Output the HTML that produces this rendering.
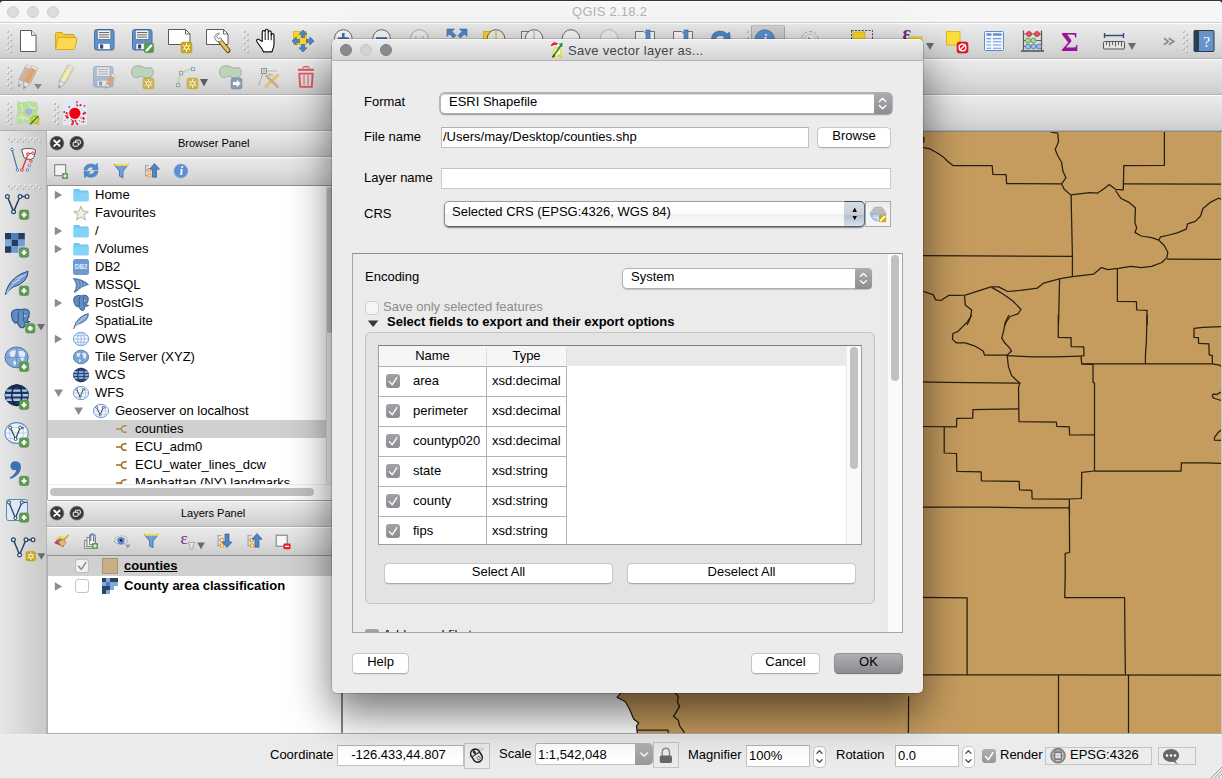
<!DOCTYPE html>
<html lang="en">
<head>
<meta charset="utf-8">
<title>QGIS 2.18.2</title>
<style>
*{box-sizing:border-box;margin:0;padding:0}
html,body{width:1222px;height:778px;overflow:hidden;background:#ececec}
body{position:relative;font-family:"Liberation Sans",sans-serif;font-size:13px;color:#000;line-height:1}
.abs{position:absolute}
.t{position:absolute;white-space:nowrap;line-height:16px;height:16px}
#titlebar{left:0;top:1px;width:1222px;height:22px;background:#f6f6f6;border-bottom:1px solid #d0d0d0;border-top:1px solid #fff;border-radius:3.5px 3.5px 0 0}
#topline{left:0;top:0;width:1222px;height:6px;background:#343434}
.tl{position:absolute;width:12px;height:12px;border-radius:50%}
.tb{left:0;width:1222px;height:36px;background:linear-gradient(#ececec 0,#e6e6e6 20%,#d8d8d8 70%,#cccccc 100%);border-top:1px solid #fff;border-bottom:1px solid #b0b0b0}
#lefttb{left:0;top:131px;width:47px;height:603px;background:linear-gradient(90deg,#e6e6e6 0,#dddddd 35%,#cdcdcd 85%,#cbcbcb 100%);border-right:1px solid #b4b4b4}
.ptitle{left:47px;width:295px;height:26px;background:linear-gradient(#ebebeb 0,#e0e0e0 40%,#cccccc 100%);border-bottom:1px solid #b0b0b0;border-top:1px solid #fff}
.ptool{left:47px;width:295px;height:29px;background:linear-gradient(#e9e9e9 0,#dedede 50%,#cccccc 100%);border-bottom:1px solid #8e8e8e;border-top:1px solid #fff}
.ptxt{font-size:11px;color:#000}
#tree{left:48px;top:186px;width:278px;height:298px;background:#fff;overflow:hidden}
.lb{left:47px;width:1px;background:#b0b0b0}
#tree .sel{position:absolute;left:0;top:234px;width:278px;height:18px;background:#d0d0d0}
#tree .r{position:absolute;white-space:nowrap;height:18px;line-height:18px;font-size:13px}
#hscroll{left:48px;top:484px;width:294px;height:17px;background:#fcfcfc;border-top:1px solid #ececec;border-bottom:1px solid #a2a2a2}
#hthumb{left:50px;top:488px;width:264px;height:8px;border-radius:4px;background:#c1c1c1}
#vscroll{left:326px;top:186px;width:16px;height:298px;background:#f5f5f5;border-left:1px solid #e0e0e0}
#vthumb{left:327px;top:187px;width:6px;height:146px;border-radius:3px;background:#c6c6c6}
#layers{left:48px;top:556px;width:294px;height:177px;background:#fff}
#layers .sel{position:absolute;left:0;top:0;width:294px;height:20px;background:#d0d0d0}
#map{left:343px;top:132px;width:878px;height:601px;background:#fff;overflow:hidden}
#mapborder{left:341px;top:131px;width:881px;height:602px;background:#c4c7cd;border-left:2px solid #858585;border-top:1px solid #8a8a8a}
#status{left:0;top:733px;width:1222px;height:45px;background:linear-gradient(#f1f1f1 0,#ebebeb 2px,#ebebeb 100%);border-top:1px solid #adadad}
.inp{position:absolute;background:#fff;border:1px solid #c2c2c2;border-top-color:#b2b2b2}
.sbtn{position:absolute;background:#ececec;border:1px solid #c4c4c4}
.btn{position:absolute;background:#fff;border-radius:4.5px;border:1px solid #c6c6c6;border-bottom-color:#ababab;box-shadow:0 1px 0 rgba(0,0,0,.06);text-align:center;font-size:13px;line-height:16px;height:20px}
.ring{border:2px solid #b7b7b7 !important;border-top-color:#b2b2b2 !important;border-bottom-color:#a8a8a8 !important;border-radius:6px !important;box-shadow:0 1px 1px rgba(0,0,0,.08),inset 0 1px 0 #d9d9d9 !important}
.ring .arr{right:-1px;top:-1px;bottom:-1px;width:18px;border-radius:0 4.5px 4.5px 0;background:linear-gradient(#ababaf,#8d8d92)}
#dlgshadow{left:332px;top:39px;width:591px;height:654px;border-radius:5px;box-shadow:0 0 0 1px rgba(0,0,0,.16),0 20px 44px rgba(0,0,0,.55)}
#dlg{left:332px;top:39px;width:591px;height:654px;border-radius:5px;background:#ececec;overflow:hidden}
#dlgtitle{left:0;top:0;width:591px;height:22px;background:linear-gradient(#ebebeb 0,#e3e3e3 40%,#d4d4d4 100%);border-bottom:1px solid #b4b4b4;border-top:1px solid #f6f6f6}
.combo{position:absolute;background:#fff;border:1px solid #b0b0b0;border-radius:4px;box-shadow:0 1px 1px rgba(0,0,0,.18)}
.combo .arr{position:absolute;right:-1px;top:-1px;bottom:-1px;width:18px;border-radius:0 4px 4px 0;background:linear-gradient(#adadb1,#8c8c91)}
.cb{position:absolute;width:14px;height:14px;border-radius:3px;background:linear-gradient(#a3a3a7,#8b8b90)}
.cbo{position:absolute;width:14px;height:14px;border-radius:3px;background:#fff;border:1px solid #c4c4c4}
</style>
</head>
<body>
<div class="abs" id="topline"></div>
<div class="abs" id="titlebar"></div>
<div class="tl" style="left:7px;top:6px;background:#dcdcdc;border:1px solid #cfcfcf"></div>
<div class="tl" style="left:27px;top:6px;background:#dcdcdc;border:1px solid #cfcfcf"></div>
<div class="tl" style="left:47px;top:6px;background:#dcdcdc;border:1px solid #cfcfcf"></div>
<div class="t" style="left:572px;top:4px;color:#b2b2b2;letter-spacing:0.27px">QGIS 2.18.2</div>

<div class="abs tb" style="top:23px"></div>
<div class="abs tb" style="top:59px"></div>
<div class="abs tb" style="top:95px"></div>
<div class="abs" style="left:751px;top:25px;width:34px;height:32px;background:linear-gradient(#d2d2d2,#b8b8b8);border:1px solid #a8a8a8;border-top-color:#c4c4c4;border-radius:2px"></div>

<svg class="abs" style="left:0;top:0;pointer-events:none" width="1222" height="131" viewBox="0 0 1222 131">
<rect x="7.2" y="30.8" width="2" height="2" fill="#b2b2b2"/><rect x="6.4" y="30.0" width="1.5" height="1.5" fill="#f4f4f4"/><rect x="10.2" y="33.7" width="2" height="2" fill="#b2b2b2"/><rect x="9.4" y="32.9" width="1.5" height="1.5" fill="#f4f4f4"/><rect x="7.2" y="36.6" width="2" height="2" fill="#b2b2b2"/><rect x="6.4" y="35.8" width="1.5" height="1.5" fill="#f4f4f4"/><rect x="10.2" y="39.5" width="2" height="2" fill="#b2b2b2"/><rect x="9.4" y="38.7" width="1.5" height="1.5" fill="#f4f4f4"/><rect x="7.2" y="42.4" width="2" height="2" fill="#b2b2b2"/><rect x="6.4" y="41.6" width="1.5" height="1.5" fill="#f4f4f4"/><rect x="10.2" y="45.3" width="2" height="2" fill="#b2b2b2"/><rect x="9.4" y="44.5" width="1.5" height="1.5" fill="#f4f4f4"/><rect x="7.2" y="48.2" width="2" height="2" fill="#b2b2b2"/><rect x="6.4" y="47.4" width="1.5" height="1.5" fill="#f4f4f4"/><rect x="10.2" y="51.1" width="2" height="2" fill="#b2b2b2"/><rect x="9.4" y="50.3" width="1.5" height="1.5" fill="#f4f4f4"/>
<path d="M20.5,30.5 h11 l4.5,4.8 v16.2 h-15.5 z" fill="#fff" stroke="#5a5a5a" stroke-width="1" stroke-linejoin="round"/><path d="M31.5,30.5 v4.8 h4.5" fill="#f0f0f0" stroke="#5a5a5a" stroke-width="0.9" stroke-linejoin="round"/>
<path d="M55.5,49.5 v-16 q0,-1 1,-1 h5.5 l1.5,2 h9.8 q1,0 1,1 v2" fill="#f3c93a" stroke="#d0a520" stroke-width="1" stroke-linejoin="round"/><path d="M55.5,49.5 l2.2,-11 q0.2,-1 1.2,-1 h17.3 q1,0 0.8,1 l-2.3,10.2 q-0.2,0.8 -1.1,0.8 z" fill="#fcd94f" stroke="#d4aa28" stroke-width="1" stroke-linejoin="round"/>
<g opacity="1.0"><rect x="94.5" y="29.5" width="19.5" height="20.5" rx="2.2" fill="#6292cf" stroke="#3f6fae"/><rect x="97.3" y="30" width="13.6" height="9.6" rx="0.8" fill="#f4f4f4" stroke="#35588c" stroke-width="0.7"/><path d="M99,32.5 h10.2 M99,34.8 h10.2 M99,37.1 h10.2" stroke="#3a3a3a" stroke-width="0.75"/><rect x="98" y="43.2" width="12.2" height="6.3" fill="#fff" stroke="#35588c" stroke-width="0.6"/><rect x="100" y="44.4" width="3.2" height="4.2" fill="#2c4d80"/></g>
<g opacity="1.0"><rect x="132.5" y="29.5" width="19.5" height="20.5" rx="2.2" fill="#6292cf" stroke="#3f6fae"/><rect x="135.3" y="30" width="13.6" height="9.6" rx="0.8" fill="#f4f4f4" stroke="#35588c" stroke-width="0.7"/><path d="M137,32.5 h10.2 M137,34.8 h10.2 M137,37.1 h10.2" stroke="#3a3a3a" stroke-width="0.75"/><rect x="136" y="43.2" width="12.2" height="6.3" fill="#fff" stroke="#35588c" stroke-width="0.6"/><rect x="138" y="44.4" width="3.2" height="4.2" fill="#2c4d80"/></g>
<rect x="144.2" y="43.2" width="9.4" height="9.4" rx="1.8" fill="#5b9a4f" stroke="#4c8742" stroke-width="0.6"/><path d="M146.6,50.4 l4.8,-4.8" stroke="#fff" stroke-width="2.1" stroke-linecap="round"/>
<path d="M168.5,29.5 h17 l4.5,4.5 v10.5 h-21.5 z" fill="#fff" stroke="#5a5a5a" stroke-linejoin="round"/><path d="M185.5,29.5 v4.5 h4.5" fill="none" stroke="#5a5a5a" stroke-width="0.9"/>
<g opacity="1.0"><rect x="181" y="42" width="11" height="11" rx="1.8" fill="#c9a91c" stroke="#b8981a" stroke-width="0.5"/><g stroke="#fff" stroke-width="1.00" fill="none"><path d="M186.5,43.10 v8.80 M182.70,45.30 l7.60,4.40 M182.70,49.70 l7.60,-4.40"/></g><circle cx="186.5" cy="47.5" r="2.00" fill="#c9a91c" stroke="#fff" stroke-width="1.00"/></g>
<path d="M206.5,29.5 h17 l4.5,4.5 v10.5 h-21.5 z" fill="#fff" stroke="#5a5a5a" stroke-linejoin="round"/><path d="M223.5,29.5 v4.5 h4.5" fill="none" stroke="#5a5a5a" stroke-width="0.9"/>
<path d="M220.5,41.5 l7.5,9" stroke="#4d4426" stroke-width="5" stroke-linecap="round"/><path d="M220.8,41.8 l7,8.4" stroke="#e6c557" stroke-width="3.2" stroke-linecap="round"/><path d="M219.5,33.2 a4.3,4.3 0 1 0 2.5,7.3 l-1.2,-2.6 l-2.6,0.6 l-1.6,-2.2 z" fill="#f2f2f2" stroke="#777" stroke-width="0.9" stroke-linejoin="round"/>
<rect x="243.8" y="30.8" width="2" height="2" fill="#b2b2b2"/><rect x="243.0" y="30.0" width="1.5" height="1.5" fill="#f4f4f4"/><rect x="246.8" y="33.7" width="2" height="2" fill="#b2b2b2"/><rect x="246.0" y="32.9" width="1.5" height="1.5" fill="#f4f4f4"/><rect x="243.8" y="36.6" width="2" height="2" fill="#b2b2b2"/><rect x="243.0" y="35.8" width="1.5" height="1.5" fill="#f4f4f4"/><rect x="246.8" y="39.5" width="2" height="2" fill="#b2b2b2"/><rect x="246.0" y="38.7" width="1.5" height="1.5" fill="#f4f4f4"/><rect x="243.8" y="42.4" width="2" height="2" fill="#b2b2b2"/><rect x="243.0" y="41.6" width="1.5" height="1.5" fill="#f4f4f4"/><rect x="246.8" y="45.3" width="2" height="2" fill="#b2b2b2"/><rect x="246.0" y="44.5" width="1.5" height="1.5" fill="#f4f4f4"/><rect x="243.8" y="48.2" width="2" height="2" fill="#b2b2b2"/><rect x="243.0" y="47.4" width="1.5" height="1.5" fill="#f4f4f4"/><rect x="246.8" y="51.1" width="2" height="2" fill="#b2b2b2"/><rect x="246.0" y="50.3" width="1.5" height="1.5" fill="#f4f4f4"/>
<path d="M262.2,41.5 v-9.3 q0,-1.6 1.5,-1.6 q1.5,0 1.5,1.6 v-1.4 q0,-1.6 1.5,-1.6 q1.5,0 1.5,1.6 v1.6 q0,-1.5 1.5,-1.5 q1.5,0 1.5,1.5 v2.6 q0,-1.4 1.4,-1.4 q1.4,0 1.4,1.4 v9 q0,3 -1.2,5 l-0.8,2.8 h-8.6 l-1.2,-2.6 q-2.5,-3.2 -5.2,-7.4 q-1,-1.7 0.4,-2.4 q1.4,-0.6 2.6,0.8 z" fill="#fff" stroke="#111" stroke-width="1.15" stroke-linejoin="round"/><path d="M265.2,33 v7 M268.2,32.5 v7.5 M271.2,34 v6.2" stroke="#111" stroke-width="1" fill="none"/>
<rect x="293.5" y="31.5" width="13" height="13" fill="#fbd42b" stroke="#e0b412" stroke-width="0.8"/><g fill="#4f86c6" stroke="#3a68a0" stroke-width="0.7" stroke-linejoin="round"><path d="M303,30 l4,4.2 h-2.4 v3.3 h-3.2 v-3.3 h-2.4 z"/><path d="M303,52 l4,-4.2 h-2.4 v-3.3 h-3.2 v3.3 h-2.4 z"/><path d="M292,41 l4.2,-4 v2.4 h3.3 v3.2 h-3.3 v2.4 z"/><path d="M314,41 l-4.2,-4 v2.4 h-3.3 v3.2 h3.3 v2.4 z"/></g>
<path d="M330,48 l5,-3 v6 z" fill="#e8b520"/>
<g opacity="1"><circle cx="343.3" cy="38.5" r="8.8" fill="#f7f7f7" stroke="#666" stroke-width="1"/><path d="M343.3,33 v11 M337.8,38.5 h11" stroke="#3f6fae" stroke-width="2.6"/></g>
<g opacity="1"><circle cx="381.6" cy="38.5" r="8.8" fill="#f7f7f7" stroke="#666" stroke-width="1"/><path d="M376.1,38.5 h11" stroke="#3f6fae" stroke-width="2.6"/></g>
<g opacity="0.45"><circle cx="419.4" cy="38.5" r="8.8" fill="#f7f7f7" stroke="#666" stroke-width="1"/><text x="419.4" y="41" font-size="8" font-weight="bold" text-anchor="middle" fill="#888" font-family="Liberation Sans, sans-serif">1:1</text></g>
<g fill="#4f86c6" stroke="#3a68a0" stroke-width="0.6"><path d="M447,29 h7.5 l-2.5,2.5 l4,4 l-2.5,2.5 l-4,-4 l-2.5,2.5 z"/><path d="M467,29 h-7.5 l2.5,2.5 l-4,4 l2.5,2.5 l4,-4 l2.5,2.5 z"/></g>
<rect x="483.5" y="31.5" width="9" height="9" fill="#fbd42b" stroke="#e0b412"/><circle cx="496" cy="38.5" r="8.8" fill="#f3ead0" stroke="#666"/><path d="M496,31 v9" stroke="#aaa"/>
<rect x="521.5" y="31.5" width="9" height="9" fill="#ececec" stroke="#777"/><circle cx="534" cy="38.5" r="8.8" fill="#f4f4f4" stroke="#666"/><path d="M534,31 v9" stroke="#aaa"/>
<circle cx="571" cy="38.5" r="8.8" fill="#f4f4f4" stroke="#666"/>
<circle cx="609" cy="38.5" r="8.8" fill="#f4f4f4" stroke="#999" opacity="0.6"/>
<path d="M635.5,41 v-9.5 h8 l2,1.5 l2,-1.5 h7 v9.5" fill="#f6f6f6" stroke="#666" stroke-width="0.9"/><rect x="646" y="30" width="4" height="11" fill="#5e90cd" stroke="#3a68a0" stroke-width="0.6"/>
<path d="M673.5,41 v-9.5 h8 l2,1.5 l2,-1.5 h7 v9.5" fill="#f6f6f6" stroke="#666" stroke-width="0.9"/><rect x="684" y="30" width="4" height="11" fill="#5e90cd" stroke="#3a68a0" stroke-width="0.6"/>
<path d="M711.5,40 q-0.5,-8 8,-9 q5,-0.3 7.5,3 l2.5,-2 l1,8 h-8 l2.2,-2.5 q-2,-2.5 -5.2,-2 q-4,0.8 -4,4.5 z" fill="#4f86c6" stroke="#3a68a0" stroke-width="0.6"/>
<rect x="746.8" y="30.8" width="2" height="2" fill="#b2b2b2"/><rect x="746.0" y="30.0" width="1.5" height="1.5" fill="#f4f4f4"/><rect x="749.8" y="33.7" width="2" height="2" fill="#b2b2b2"/><rect x="749.0" y="32.9" width="1.5" height="1.5" fill="#f4f4f4"/><rect x="746.8" y="36.6" width="2" height="2" fill="#b2b2b2"/><rect x="746.0" y="35.8" width="1.5" height="1.5" fill="#f4f4f4"/>
<circle cx="764.8" cy="39.4" r="9.6" fill="#5b8fd0" stroke="#3e6daa" stroke-width="0.8"/><text x="765.2" y="43.4" font-size="12" font-style="italic" font-weight="bold" text-anchor="middle" fill="#fff" font-family="Liberation Serif, serif">i</text>
<g opacity="0.75"><circle cx="809.8" cy="40" r="8.4" fill="#e9e9e9" stroke="#8a8a8a" stroke-width="1" stroke-dasharray="3.2 1.6"/><circle cx="809.8" cy="40" r="5.5" fill="#f4f4f4" stroke="#9a9a9a" stroke-width="0.7"/><path d="M808,36.5 l5,3.5 l-5,3.5 z" fill="#6c96c8"/></g>
<rect x="851.5" y="30.5" width="21" height="14" fill="none" stroke="#333" stroke-width="0.9" stroke-dasharray="2 1.4"/><rect x="853" y="32" width="12" height="12" fill="#fbd42b" stroke="#d8ae10" stroke-width="0.7"/>
<text x="902.6" y="40.4" font-size="20" font-weight="bold" fill="#6a2a7a" font-family="Liberation Serif, serif">ε</text><rect x="909" y="37" width="13" height="8" fill="#fbd42b" stroke="#d8ae10" stroke-width="0.7"/>
<path d="M926,43 h8 l-4.0,7 z" fill="#6b6b6b"/>
<rect x="946.5" y="31.5" width="13.5" height="13.5" fill="#fde13a" stroke="#d9b616" stroke-width="0.9"/><rect x="957" y="42" width="11" height="11" rx="2.2" fill="#e1202a" stroke="#b8131c" stroke-width="0.6"/><circle cx="962.5" cy="47.5" r="3.4" fill="none" stroke="#fff" stroke-width="1.3"/><path d="M960.2,49.8 l4.6,-4.6" stroke="#fff" stroke-width="1.3"/>
<rect x="984.5" y="31.5" width="19" height="19" rx="1" fill="#f3f7fd" stroke="#5b8dcb" stroke-width="1"/><rect x="986.5" y="33.3" width="5" height="2.4" fill="#5b8dcb"/><rect x="993" y="33.3" width="8.5" height="2.4" fill="#5b8dcb"/><g stroke="#6c9bd4" stroke-width="1.1"><path d="M986.5,38.6 h4.5 M993,38.6 h8.5 M986.5,41.8 h4.5 M993,41.8 h8.5 M986.5,45 h4.5 M993,45 h8.5 M986.5,48.2 h4.5 M993,48.2 h8.5"/></g>
<path d="M1023.5,30.5 v20 M1041.5,30.5 v20" stroke="#555" stroke-width="1.2"/><path d="M1021,51 h23" stroke="#555" stroke-width="1.6"/><path d="M1023.5,34 h18 M1023.5,40.5 h18 M1023.5,46.5 h18" stroke="#555" stroke-width="0.9"/><g stroke-width="0.8"><circle cx="1029" cy="34" r="2.5" fill="#e8545c" stroke="#b52730"/><circle cx="1037" cy="34" r="2.5" fill="#e8545c" stroke="#b52730"/><circle cx="1028" cy="40.5" r="2.5" fill="#a6d69a" stroke="#4f9a45"/><circle cx="1033.5" cy="40.5" r="2.5" fill="#a6d69a" stroke="#4f9a45"/><circle cx="1028" cy="46.5" r="2.5" fill="#9cc0e8" stroke="#3f6fae"/><circle cx="1033.5" cy="46.5" r="2.5" fill="#9cc0e8" stroke="#3f6fae"/><circle cx="1039" cy="46.5" r="2.5" fill="#9cc0e8" stroke="#3f6fae"/></g>
<text x="1069.8" y="50.5" font-size="27" font-weight="bold" text-anchor="middle" fill="#9c1199" font-family="Liberation Serif, serif">Σ</text>
<path d="M1104,35.5 h20 M1104.5,33 v5 M1123.5,33 v5" stroke="#2f4f7a" stroke-width="1.4" fill="none"/><rect x="1103.5" y="41.5" width="21" height="7.5" rx="1" fill="#e3e3e3" stroke="#555" stroke-width="1"/><path d="M1106.5,42 v3 M1109.5,42 v4.5 M1112.5,42 v3 M1115.5,42 v4.5 M1118.5,42 v3 M1121.5,42 v4.5" stroke="#555" stroke-width="0.9"/>
<path d="M1128,43 h8 l-4.0,7 z" fill="#6b6b6b"/>
<path d="M1164,38.2 l4.2,3.3 l-4.2,3.3 M1168.8,38.2 l5,3.3 l-5,3.3" stroke="#8a8a8a" stroke-width="1.7" fill="none"/>
<rect x="1182.8" y="30.8" width="2" height="2" fill="#b2b2b2"/><rect x="1182.0" y="30.0" width="1.5" height="1.5" fill="#f4f4f4"/><rect x="1185.8" y="33.7" width="2" height="2" fill="#b2b2b2"/><rect x="1185.0" y="32.9" width="1.5" height="1.5" fill="#f4f4f4"/><rect x="1182.8" y="36.6" width="2" height="2" fill="#b2b2b2"/><rect x="1182.0" y="35.8" width="1.5" height="1.5" fill="#f4f4f4"/><rect x="1185.8" y="39.5" width="2" height="2" fill="#b2b2b2"/><rect x="1185.0" y="38.7" width="1.5" height="1.5" fill="#f4f4f4"/><rect x="1182.8" y="42.4" width="2" height="2" fill="#b2b2b2"/><rect x="1182.0" y="41.6" width="1.5" height="1.5" fill="#f4f4f4"/><rect x="1185.8" y="45.3" width="2" height="2" fill="#b2b2b2"/><rect x="1185.0" y="44.5" width="1.5" height="1.5" fill="#f4f4f4"/><rect x="1182.8" y="48.2" width="2" height="2" fill="#b2b2b2"/><rect x="1182.0" y="47.4" width="1.5" height="1.5" fill="#f4f4f4"/><rect x="1185.8" y="51.1" width="2" height="2" fill="#b2b2b2"/><rect x="1185.0" y="50.3" width="1.5" height="1.5" fill="#f4f4f4"/>
<rect x="1194" y="30.5" width="20" height="21" rx="1" fill="#6593cb" stroke="#222c3a" stroke-width="0.9"/><rect x="1194" y="30.5" width="5" height="21" fill="#2b3e54"/><text x="1206.6" y="46.6" font-size="15.5" text-anchor="middle" fill="#fff" font-family="Liberation Serif, serif">?</text>
<rect x="7.2" y="66.8" width="2" height="2" fill="#b2b2b2"/><rect x="6.4" y="66.0" width="1.5" height="1.5" fill="#f4f4f4"/><rect x="10.2" y="69.7" width="2" height="2" fill="#b2b2b2"/><rect x="9.4" y="68.9" width="1.5" height="1.5" fill="#f4f4f4"/><rect x="7.2" y="72.6" width="2" height="2" fill="#b2b2b2"/><rect x="6.4" y="71.8" width="1.5" height="1.5" fill="#f4f4f4"/><rect x="10.2" y="75.5" width="2" height="2" fill="#b2b2b2"/><rect x="9.4" y="74.7" width="1.5" height="1.5" fill="#f4f4f4"/><rect x="7.2" y="78.4" width="2" height="2" fill="#b2b2b2"/><rect x="6.4" y="77.6" width="1.5" height="1.5" fill="#f4f4f4"/><rect x="10.2" y="81.3" width="2" height="2" fill="#b2b2b2"/><rect x="9.4" y="80.5" width="1.5" height="1.5" fill="#f4f4f4"/><rect x="7.2" y="84.2" width="2" height="2" fill="#b2b2b2"/><rect x="6.4" y="83.4" width="1.5" height="1.5" fill="#f4f4f4"/><rect x="10.2" y="87.1" width="2" height="2" fill="#b2b2b2"/><rect x="9.4" y="86.3" width="1.5" height="1.5" fill="#f4f4f4"/>
<g opacity="0.9"><path d="M24.3,82.0 L31.7,67.3 L26.3,64.7 L19.0,79.4 z" fill="#d9b6a0" stroke="#a09a90" stroke-width="0.6"/><path d="M21.6,80.7 L29.0,66.0" stroke="#d7a88c" stroke-width="2.2"/><path d="M30.7,69.3 L31.7,67.3 L26.3,64.7 L25.3,66.6 z" fill="#f2f2f2" stroke="#b5b5b5" stroke-width="0.5"/><path d="M18.5,87.0 L24.3,82.0 L19.0,79.4 z" fill="#e4e4e4" stroke="#9a9a9a" stroke-width="0.6"/><path d="M18.5,87.0 L20.8,85.0 L18.7,83.9 z" fill="#8d8d8d"/></g>
<g opacity="0.95"><path d="M29.8,83.9 L37.8,68.5 L32.2,65.5 L24.1,80.9 z" fill="#dfae84" stroke="#a09a90" stroke-width="0.6"/><path d="M26.9,82.4 L35.0,67.0" stroke="#e19a62" stroke-width="2.3"/><path d="M36.8,70.4 L37.8,68.5 L32.2,65.5 L31.1,67.5 z" fill="#f2f2f2" stroke="#b5b5b5" stroke-width="0.5"/><path d="M23.5,89.0 L29.8,83.9 L24.1,80.9 z" fill="#e4e4e4" stroke="#9a9a9a" stroke-width="0.6"/><path d="M23.5,89.0 L26.0,87.0 L23.7,85.8 z" fill="#8d8d8d"/></g>
<path d="M34,84 h8 l-4.0,5.5 z" fill="#8b8b8b"/>
<g opacity="0.95"><path d="M65.0,83.5 L73.8,68.1 L68.2,64.9 L59.5,80.3 z" fill="#efe09a" stroke="#a09a90" stroke-width="0.6"/><path d="M62.2,81.9 L71.0,66.5" stroke="#f5ecc0" stroke-width="2.3"/><path d="M72.7,70.0 L73.8,68.1 L68.2,64.9 L67.1,66.8 z" fill="#f2f2f2" stroke="#b5b5b5" stroke-width="0.5"/><path d="M58.5,88.5 L65.0,83.5 L59.5,80.3 z" fill="#e4e4e4" stroke="#9a9a9a" stroke-width="0.6"/><path d="M58.5,88.5 L61.1,86.5 L58.9,85.2 z" fill="#8d8d8d"/></g>
<g opacity="0.42"><rect x="93.5" y="66.5" width="19.5" height="20.5" rx="2.2" fill="#6292cf" stroke="#3f6fae"/><rect x="96.3" y="67" width="13.6" height="9.6" rx="0.8" fill="#f4f4f4" stroke="#35588c" stroke-width="0.7"/><path d="M98,69.5 h10.2 M98,71.8 h10.2 M98,74.1 h10.2" stroke="#3a3a3a" stroke-width="0.75"/><rect x="97" y="80.2" width="12.2" height="6.3" fill="#fff" stroke="#35588c" stroke-width="0.6"/><rect x="99" y="81.4" width="3.2" height="4.2" fill="#2c4d80"/></g>
<g opacity="0.9"><path d="M110.0,85.7 L115.9,76.2 L112.1,73.8 L106.1,83.2 z" fill="#dfae84" stroke="#a09a90" stroke-width="0.6"/><path d="M108.0,84.5 L114.0,75.0" stroke="#e19a62" stroke-width="1.7"/><path d="M114.8,78.1 L115.9,76.2 L112.1,73.8 L110.9,75.6 z" fill="#f2f2f2" stroke="#b5b5b5" stroke-width="0.5"/><path d="M105.5,88.5 L110.0,85.7 L106.1,83.2 z" fill="#e4e4e4" stroke="#9a9a9a" stroke-width="0.6"/><path d="M105.5,88.5 L107.3,87.4 L105.7,86.4 z" fill="#8d8d8d"/></g>
<path d="M131.6,71.6 q0.2,-5.4 6.2,-5.8 q3.4,0 6.4,1.8 q2.6,1.2 5,0.2 q4,-0.6 4,4.6 q-0.4,5.2 -5.4,5.6 q-3.4,-0.2 -6,-1.6 q-2.6,-0.4 -5,1.2 q-4.8,0.6 -5.2,-6 z" fill="#b5d3b5" stroke="#9a9a9a" stroke-width="0.9" opacity="0.85"/>
<g opacity="0.75"><rect x="143" y="78" width="11" height="11" rx="1.8" fill="#c9a91c" stroke="#b8981a" stroke-width="0.5"/><g stroke="#fff" stroke-width="1.00" fill="none"><path d="M148.5,79.10 v8.80 M144.70,81.30 l7.60,4.40 M144.70,85.70 l7.60,-4.40"/></g><circle cx="148.5" cy="83.5" r="2.00" fill="#c9a91c" stroke="#fff" stroke-width="1.00"/></g>
<g opacity="0.8"><path d="M178,85 q0.2,-14.6 15.4,-16.4" fill="none" stroke="#b0d8b0" stroke-width="1.9"/><rect x="176.5" y="83.5" width="3.2" height="3.2" fill="#e2e2e2" stroke="#8a8a8a" stroke-width="0.9"/><rect x="179.5" y="71.5" width="3.2" height="3.2" fill="#e2e2e2" stroke="#8a8a8a" stroke-width="0.9"/><rect x="191.5" y="67.5" width="3.2" height="3.2" fill="#e2e2e2" stroke="#8a8a8a" stroke-width="0.9"/></g>
<g opacity="0.75"><rect x="187" y="78" width="11" height="11" rx="1.8" fill="#c9a91c" stroke="#b8981a" stroke-width="0.5"/><g stroke="#fff" stroke-width="1.00" fill="none"><path d="M192.5,79.10 v8.80 M188.70,81.30 l7.60,4.40 M188.70,85.70 l7.60,-4.40"/></g><circle cx="192.5" cy="83.5" r="2.00" fill="#c9a91c" stroke="#fff" stroke-width="1.00"/></g>
<path d="M200,79 h8 l-4.0,7.5 z" fill="#5d5d5d"/>
<path d="M219.6,71.6 q0.2,-5.4 6.2,-5.8 q3.4,0 6.4,1.8 q2.6,1.2 5,0.2 q4,-0.6 4,4.6 q-0.4,5.2 -5.4,5.6 q-3.4,-0.2 -6,-1.6 q-2.6,-0.4 -5,1.2 q-4.8,0.6 -5.2,-6 z" fill="#b5d3b5" stroke="#9a9a9a" stroke-width="0.9" opacity="0.85"/>
<g opacity="0.85"><rect x="231" y="78" width="11" height="11" rx="2" fill="#7893ac" stroke="#6a8197" stroke-width="0.6"/><path d="M233,82 h3.8 v-2.3 l4,3.8 l-4,3.8 v-2.3 h-3.8 z" fill="#fff"/></g>
<g opacity="0.8"><path d="M258.5,86 l5.5,-16" stroke="#9a9a9a" stroke-width="0.9"/><rect x="261.5" y="68.5" width="5" height="5" fill="#f4f4f4" stroke="#777" stroke-width="0.9"/><circle cx="264" cy="71" r="1.3" fill="none" stroke="#777" stroke-width="0.7"/><path d="M267,71 h10" stroke="#bbb" stroke-width="1.2"/><path d="M266,86.5 l12,-11.5" stroke="#d9bd58" stroke-width="2.6" stroke-linecap="round"/><path d="M266.5,76 l11,10.5" stroke="#c9a268" stroke-width="2.8" stroke-linecap="round"/><path d="M266,77.5 l4,-3.4 l3,1.6" stroke="#b0b0b0" stroke-width="1.8" fill="none"/></g>
<g fill="none" stroke="#df575c"><path d="M298,69.8 h16" stroke-width="2"/><path d="M302.8,68.6 q0,-1.9 1.8,-1.9 h2.8 q1.8,0 1.8,1.9" stroke-width="1.2"/><path d="M299.3,73.6 h13.4 l-0.9,13.3 h-11.6 z" stroke-width="1.9" stroke-linejoin="round"/><path d="M304,75 v10.6 M308,75 v10.6" stroke-width="1.7" stroke="#e68f92"/></g>
<rect x="7.2" y="102.8" width="2" height="2" fill="#b2b2b2"/><rect x="6.4" y="102.0" width="1.5" height="1.5" fill="#f4f4f4"/><rect x="10.2" y="105.7" width="2" height="2" fill="#b2b2b2"/><rect x="9.4" y="104.9" width="1.5" height="1.5" fill="#f4f4f4"/><rect x="7.2" y="108.6" width="2" height="2" fill="#b2b2b2"/><rect x="6.4" y="107.8" width="1.5" height="1.5" fill="#f4f4f4"/><rect x="10.2" y="111.5" width="2" height="2" fill="#b2b2b2"/><rect x="9.4" y="110.7" width="1.5" height="1.5" fill="#f4f4f4"/><rect x="7.2" y="114.4" width="2" height="2" fill="#b2b2b2"/><rect x="6.4" y="113.6" width="1.5" height="1.5" fill="#f4f4f4"/><rect x="10.2" y="117.3" width="2" height="2" fill="#b2b2b2"/><rect x="9.4" y="116.5" width="1.5" height="1.5" fill="#f4f4f4"/><rect x="7.2" y="120.2" width="2" height="2" fill="#b2b2b2"/><rect x="6.4" y="119.4" width="1.5" height="1.5" fill="#f4f4f4"/><rect x="10.2" y="123.1" width="2" height="2" fill="#b2b2b2"/><rect x="9.4" y="122.3" width="1.5" height="1.5" fill="#f4f4f4"/>
<path d="M17,101.5 l6,1 l6,-1.2 l8,0.8 l1,7 l-1.2,6 l1.2,8 l-7,1 l-7,-1 l-7,1.2 l-0.6,-8 l1,-6 z" fill="#b7dca0"/><path d="M20,104 q4,3 2,8 q-2,5 2,9 M28,103 q3,6 8,5 M18,118 q6,-3 10,2" stroke="#d9e8b8" stroke-width="1.6" fill="none"/><path d="M25,110 q4,-3 7,0 q1,4 -3,5 q-4,0 -4,-5 z" fill="#9db8e0"/><path d="M20,113 q3,-2 6,1" stroke="#e5c08a" stroke-width="0.9" fill="none"/><circle cx="35" cy="119.5" r="3.6" fill="none" stroke="#c9c11e" stroke-width="2"/><path d="M30,124.5 l8.5,-8.5" stroke="#3e8a2c" stroke-width="1.6"/><path d="M36,122 l2.8,2.8" stroke="#c9c11e" stroke-width="1.8"/>
<rect x="54.0" y="102.8" width="2" height="2" fill="#b2b2b2"/><rect x="53.2" y="102.0" width="1.5" height="1.5" fill="#f4f4f4"/><rect x="57.0" y="105.7" width="2" height="2" fill="#b2b2b2"/><rect x="56.2" y="104.9" width="1.5" height="1.5" fill="#f4f4f4"/><rect x="54.0" y="108.6" width="2" height="2" fill="#b2b2b2"/><rect x="53.2" y="107.8" width="1.5" height="1.5" fill="#f4f4f4"/><rect x="57.0" y="111.5" width="2" height="2" fill="#b2b2b2"/><rect x="56.2" y="110.7" width="1.5" height="1.5" fill="#f4f4f4"/><rect x="54.0" y="114.4" width="2" height="2" fill="#b2b2b2"/><rect x="53.2" y="113.6" width="1.5" height="1.5" fill="#f4f4f4"/><rect x="57.0" y="117.3" width="2" height="2" fill="#b2b2b2"/><rect x="56.2" y="116.5" width="1.5" height="1.5" fill="#f4f4f4"/><rect x="54.0" y="120.2" width="2" height="2" fill="#b2b2b2"/><rect x="53.2" y="119.4" width="1.5" height="1.5" fill="#f4f4f4"/><rect x="57.0" y="123.1" width="2" height="2" fill="#b2b2b2"/><rect x="56.2" y="122.3" width="1.5" height="1.5" fill="#f4f4f4"/>
<rect x="63" y="101" width="24" height="24" fill="#dfe9f7"/><circle cx="74.8" cy="113.3" r="5.6" fill="#f10012"/><circle cx="75.5" cy="121.0" r="1.1" fill="#f01020"/><circle cx="67.2" cy="114.3" r="0.5" fill="#f01020"/><circle cx="65.0" cy="120.3" r="0.5" fill="#f01020"/><circle cx="76.6" cy="123.2" r="0.9" fill="#f01020"/><circle cx="77.0" cy="101.9" r="0.9" fill="#f01020"/><circle cx="77.5" cy="124.2" r="0.9" fill="#f01020"/><circle cx="77.4" cy="105.5" r="0.9" fill="#f01020"/><circle cx="71.9" cy="124.2" r="0.9" fill="#f01020"/><circle cx="83.7" cy="118.7" r="1.1" fill="#f01020"/><circle cx="66.7" cy="113.0" r="1.1" fill="#f01020"/><circle cx="72.5" cy="124.2" r="0.9" fill="#f01020"/><circle cx="83.5" cy="113.7" r="0.9" fill="#f01020"/><circle cx="80.5" cy="105.2" r="1.1" fill="#f01020"/><circle cx="67.1" cy="117.3" r="1.1" fill="#f01020"/><circle cx="79.5" cy="120.8" r="0.5" fill="#f01020"/><circle cx="83.2" cy="118.0" r="0.9" fill="#f01020"/><circle cx="64.2" cy="112.0" r="0.9" fill="#f01020"/><circle cx="81.4" cy="121.8" r="0.5" fill="#f01020"/><circle cx="67.7" cy="117.6" r="1.1" fill="#f01020"/><circle cx="73.3" cy="122.3" r="0.9" fill="#f01020"/><circle cx="69.3" cy="107.1" r="0.9" fill="#f01020"/><circle cx="80.9" cy="117.8" r="0.6" fill="#f01020"/><circle cx="73.0" cy="123.4" r="0.6" fill="#f01020"/><circle cx="83.5" cy="121.7" r="0.9" fill="#f01020"/><circle cx="67.6" cy="115.2" r="0.5" fill="#f01020"/><circle cx="84.5" cy="105.8" r="0.9" fill="#f01020"/><circle cx="83.5" cy="114.3" r="0.6" fill="#f01020"/><circle cx="76.3" cy="104.0" r="0.5" fill="#f01020"/><circle cx="72.6" cy="121.2" r="1.1" fill="#f01020"/><circle cx="72.6" cy="121.5" r="0.6" fill="#f01020"/><circle cx="71.3" cy="119.6" r="0.5" fill="#f01020"/><circle cx="66.0" cy="115.9" r="0.9" fill="#f01020"/><circle cx="85.0" cy="113.1" r="1.1" fill="#f01020"/><circle cx="84.2" cy="112.2" r="0.6" fill="#f01020"/>
</svg>

<div class="abs" id="lefttb"></div>

<div class="abs ptitle" style="top:131px"></div>
<div class="t ptxt" style="left:178px;top:135px">Browser Panel</div>
<div class="abs ptool" style="top:157px"></div>
<div class="abs" id="tree">
  <div class="sel"></div>
  <div class="r" style="left:47px;top:0">Home</div>
  <div class="r" style="left:47px;top:18px">Favourites</div>
  <div class="r" style="left:47px;top:36px">/</div>
  <div class="r" style="left:47px;top:54px">/Volumes</div>
  <div class="r" style="left:47px;top:72px">DB2</div>
  <div class="r" style="left:47px;top:90px">MSSQL</div>
  <div class="r" style="left:47px;top:108px">PostGIS</div>
  <div class="r" style="left:47px;top:126px">SpatiaLite</div>
  <div class="r" style="left:47px;top:144px">OWS</div>
  <div class="r" style="left:47px;top:162px">Tile Server (XYZ)</div>
  <div class="r" style="left:47px;top:180px">WCS</div>
  <div class="r" style="left:47px;top:198px">WFS</div>
  <div class="r" style="left:67px;top:216px">Geoserver on localhost</div>
  <div class="r" style="left:87px;top:234px">counties</div>
  <div class="r" style="left:87px;top:252px">ECU_adm0</div>
  <div class="r" style="left:87px;top:270px">ECU_water_lines_dcw</div>
  <div class="r" style="left:87px;top:288px">Manhattan (NY) landmarks</div>
  <svg class="abs" style="left:68px;top:288px" width="12" height="18" viewBox="0 0 12 18"><path d="M0,9 h5.4" stroke="#9a6a1c" stroke-width="1.5" fill="none"/><path d="M10.6,5.7 q-5.2,-0.2 -5.2,3.3 q0,3.5 5.2,3.3" stroke="#9a6a1c" stroke-width="1.5" fill="none"/></svg>
</div>
<div class="abs lb" style="top:186px;height:314px"></div>
<div class="abs lb" style="top:556px;height:177px"></div>
<div class="abs" id="vscroll"></div>
<div class="abs" id="vthumb"></div>
<div class="abs" id="hscroll"></div>
<div class="abs" id="hthumb"></div>

<div class="abs ptitle" style="top:501px"></div>
<div class="t ptxt" style="left:181px;top:505px">Layers Panel</div>
<div class="abs ptool" style="top:527px"></div>
<div class="abs" id="layers">
  <div class="sel"></div>
  <div class="cbo" style="left:27px;top:3px;background:#f0f0f0;border-color:#bdbdbd"></div>
  <div class="abs" style="left:54px;top:2px;width:16px;height:16px;background:#c8ae87;border:1px solid #a8926f"></div>
  <div class="t" style="left:76px;top:2px;font-weight:bold;text-decoration:underline">counties</div>
  <div class="cbo" style="left:27px;top:23px"></div>
  <div class="t" style="left:76px;top:22px;font-weight:bold">County area classification</div>
</div>

<svg class="abs" style="left:0;top:131px;pointer-events:none" width="342" height="602" viewBox="0 131 342 602">
<circle cx="56.9" cy="143.2" r="6.9" fill="#3a3a3a" stroke="#6a6a6a" stroke-width="0.6"/><path d="M54.2,140.5 l5.4,5.4 M59.6,140.5 l-5.4,5.4" stroke="#fff" stroke-width="1.9" stroke-linecap="round"/>
<circle cx="76.8" cy="143.2" r="6.9" fill="#3a3a3a" stroke="#6a6a6a" stroke-width="0.6"/><rect x="75.3" y="140.2" width="5" height="4" rx="0.8" fill="none" stroke="#fff" stroke-width="1"/><rect x="73.2" y="142.2" width="5" height="4" rx="0.8" fill="#3a3a3a" stroke="#fff" stroke-width="1"/>
<circle cx="56.9" cy="513.2" r="6.9" fill="#3a3a3a" stroke="#6a6a6a" stroke-width="0.6"/><path d="M54.2,510.50000000000006 l5.4,5.4 M59.6,510.50000000000006 l-5.4,5.4" stroke="#fff" stroke-width="1.9" stroke-linecap="round"/>
<circle cx="76.8" cy="513.2" r="6.9" fill="#3a3a3a" stroke="#6a6a6a" stroke-width="0.6"/><rect x="75.3" y="510.20000000000005" width="5" height="4" rx="0.8" fill="none" stroke="#fff" stroke-width="1"/><rect x="73.2" y="512.2" width="5" height="4" rx="0.8" fill="#3a3a3a" stroke="#fff" stroke-width="1"/>
<rect x="54.7" y="164.7" width="11" height="11" fill="#f2f2f2" stroke="#777" stroke-width="1"/><rect x="62" y="173" width="6" height="6" rx="1" fill="#5d9b50"/><circle cx="65" cy="176" r="1.7" fill="#d8ecd4"/>
<g fill="#4f8ad0" stroke="#3668a6" stroke-width="0.5" stroke-linejoin="round"><path d="M84,170.1 q0.5,-6 7,-6.2 q2.6,0 4.4,1.4 l1.8,-1.9 l0.9,6.4 h-6.4 l1.9,-2 q-1.2,-0.9 -2.7,-0.8 q-3.2,0.4 -3.8,3.1 z"/><path d="M98,171.1 q-0.5,6 -7,6.2 q-2.6,0 -4.4,-1.4 l-1.8,1.9 l-0.9,-6.4 h6.4 l-1.9,2 q1.2,0.9 2.7,0.8 q3.2,-0.4 3.8,-3.1 z"/></g>
<path d="M114.2,164.6 h14 l-5.3,6.6 v6.6 l-3.4,-1.6 v-5 z" fill="#6da0dd" stroke="#3d6eae" stroke-width="0.9" stroke-linejoin="round"/><path d="M114.5,164.9 h13.4" stroke="#f6dc3c" stroke-width="2"/>
<path d="M145,165.6 h4 M145.5,165.6 v11 M145.5,170.1 h3 M145.5,175.6 h3" stroke="#9a9a9a" stroke-width="0.9" fill="none"/><rect x="148" y="168.6" width="2.8" height="2.8" fill="#fff" stroke="#f39a1d" stroke-width="1"/><rect x="148" y="174.1" width="2.8" height="2.8" fill="#fff" stroke="#f39a1d" stroke-width="1"/><path d="M154.5,163.6 l5,5.6 h-3 v8 h-4 v-8 h-3 z" fill="#4f86c6" stroke="#2f5c96" stroke-width="0.7" stroke-linejoin="round"/>
<circle cx="180.9" cy="171" r="6.9" fill="#5b8fd0" stroke="#7da6da" stroke-width="0.8"/><text x="181.3" y="175.2" font-size="11.5" font-style="italic" font-weight="bold" text-anchor="middle" fill="#fff" font-family="Liberation Serif, serif">i</text>
<path d="M54.8,190.7 l7.4,4.3 l-7.4,4.3 z" fill="#8c8c8c"/>
<path d="M73.5,189.8 q0,-0.9 0.9,-0.9 h4.6 l1.6,1.6 h7 q0.9,0 0.9,0.9 v8.9 q0,0.9 -0.9,0.9 h-13.2 q-0.9,0 -0.9,-0.9 z" fill="#6fc9f2"/><path d="M73.5,192.4 h15 v7.9 q0,0.9 -0.9,0.9 h-13.2 q-0.9,0 -0.9,-0.9 z" fill="#84d4f7"/>
<polygon points="81.0,206.2 82.9,211.1 88.2,211.5 84.1,214.8 85.5,219.9 81.0,217.1 76.5,219.9 77.9,214.8 73.8,211.5 79.1,211.1" fill="#f0f1e8" stroke="#b9bda4" stroke-width="1.1" stroke-linejoin="round"/>
<path d="M54.8,226.7 l7.4,4.3 l-7.4,4.3 z" fill="#8c8c8c"/>
<path d="M73.5,225.8 q0,-0.9 0.9,-0.9 h4.6 l1.6,1.6 h7 q0.9,0 0.9,0.9 v8.9 q0,0.9 -0.9,0.9 h-13.2 q-0.9,0 -0.9,-0.9 z" fill="#6fc9f2"/><path d="M73.5,228.4 h15 v7.9 q0,0.9 -0.9,0.9 h-13.2 q-0.9,0 -0.9,-0.9 z" fill="#84d4f7"/>
<path d="M54.8,244.7 l7.4,4.3 l-7.4,4.3 z" fill="#8c8c8c"/>
<path d="M73.5,243.8 q0,-0.9 0.9,-0.9 h4.6 l1.6,1.6 h7 q0.9,0 0.9,0.9 v8.9 q0,0.9 -0.9,0.9 h-13.2 q-0.9,0 -0.9,-0.9 z" fill="#6fc9f2"/><path d="M73.5,246.4 h15 v7.9 q0,0.9 -0.9,0.9 h-13.2 q-0.9,0 -0.9,-0.9 z" fill="#84d4f7"/>
<rect x="73" y="259" width="16" height="16" rx="2.5" fill="#6f9ad0"/><text x="81" y="269.2" font-size="6.3" font-weight="bold" text-anchor="middle" fill="#e6eef8" font-family="Liberation Sans, sans-serif">DB2</text>
<path d="M73.5,278.5 q9,0.5 15,6 q-7,1.5 -13,7.5 q-1,0 -1.5,0.2 q5,-7 -0.5,-13.7 z" fill="#5c86ba" stroke="#3d6292" stroke-width="0.7" stroke-linejoin="round"/><path d="M77,280 q3,4 0.5,9 M80.5,281.4 q2.2,3 0.5,6.2 M84,283 q1.2,1.6 0.4,3.4" stroke="#a8c2e2" stroke-width="0.8" fill="none"/>
<path d="M54.8,298.7 l7.4,4.3 l-7.4,4.3 z" fill="#8c8c8c"/>
<g transform="translate(73.5,303) scale(1.0)"><path d="M3.2,-7.2 q-3.2,0.6 -3,4.6 q0.2,3.6 2.6,6 q1.4,0.8 2.2,-0.6 q1,3.6 3.2,4.6 q2.4,0.6 2.8,-1.8 q0.2,-1.8 0.6,-2.6 q2.4,0.6 3.6,-0.6 q-1.6,-0.2 -2.4,-1 q2.4,-3.2 2,-6.6 q-0.8,-2.8 -4.4,-2.6 q-1.6,0 -2.6,0.6 q-2,-0.8 -4.6,0 z" fill="#5f8dc4" stroke="#30527f" stroke-width="0.9" stroke-linejoin="round"/><path d="M6.4,-6 q-1.2,2.4 -0.6,5.4 q0.4,2 -0.6,4.2 M9.6,-6.2 q1.4,2.6 0.6,6.4 q-0.2,1.2 0.4,2.4" stroke="#30527f" stroke-width="0.8" fill="none"/><circle cx="11.2" cy="-2.4" r="0.6" fill="#fff"/></g>
<g transform="translate(73.3,321) scale(1.0)"><path d="M0.4,7.6 q1.2,-6.4 6,-10.6 q4,-3.4 8.6,-4.4 q0.4,3.6 -2.4,6.4 q-3.4,3 -7.6,4 q-2.6,1.6 -4.6,4.6 z" fill="#7fa6d6" stroke="#35547f" stroke-width="0.8" stroke-linejoin="round"/><path d="M1.2,6.4 q4,-6.6 12,-11.6" stroke="#dbe7f5" stroke-width="0.8" fill="none"/></g>
<path d="M54.8,334.7 l7.4,4.3 l-7.4,4.3 z" fill="#8c8c8c"/>
<ellipse cx="81" cy="339" rx="7.6" ry="6.6" fill="#f4f8fd" stroke="#6a9ad6" stroke-width="1"/><ellipse cx="81" cy="339" rx="3.4" ry="6.6" fill="none" stroke="#8db3e2" stroke-width="0.8"/><path d="M73.4,339 h15.2 M74.4,335.7 h13.2 M74.4,342.3 h13.2 M81,332.4 v13.2" stroke="#8db3e2" stroke-width="0.8" fill="none"/>
<ellipse cx="81" cy="357" rx="7.6" ry="6.8" fill="#7ca3d4" stroke="#4f7db8" stroke-width="0.9"/><path d="M76.5,354 q2,-2 4,-1 q-0.5,3 -2,4.5 q-2,-0.5 -2,-3.5 z M82,353 q3,-1 4.5,1 q0,3 -1.5,5.5 q-1.5,-1 -2,-3 z M79,359 q1.5,0 2,2 q-1,1.5 -2,1 z" fill="#dfeaf7"/>
<ellipse cx="81" cy="375" rx="7.7" ry="6.8" fill="#2d4a7c" stroke="#1f3358" stroke-width="0.8"/><path d="M74.2,372 h13.6 M73.5,375 h15 M74.2,378 h13.6" stroke="#9ec0ea" stroke-width="1.6"/><ellipse cx="81" cy="375" rx="3.2" ry="6.6" fill="none" stroke="#1f3358" stroke-width="1.1"/>
<path d="M54.2,389.6 h8.8 l-4.4,7.4 z" fill="#8c8c8c"/>
<ellipse cx="81" cy="393" rx="7.6" ry="6.6" fill="#f4f8fd" stroke="#6a9ad6" stroke-width="1"/><path d="M73.4,393 h15.2 M74.6,396.4 h12.8 M84.6,387.2 q2,6 0,11.6" stroke="#a9c6ea" stroke-width="0.7" fill="none"/><path d="M76.6,389.4 l3.6,7.6 l3,-7.6 l2.4,0.6" stroke="#3b4a60" stroke-width="1" fill="none"/><circle cx="76.6" cy="389.4" r="1" fill="#fff" stroke="#3b4a60" stroke-width="0.7"/><circle cx="83.2" cy="389.4" r="1" fill="#fff" stroke="#3b4a60" stroke-width="0.7"/><circle cx="80.2" cy="397" r="1" fill="#fff" stroke="#3b4a60" stroke-width="0.7"/>
<path d="M74.2,407.6 h8.8 l-4.4,7.4 z" fill="#8c8c8c"/>
<ellipse cx="101" cy="411" rx="7.6" ry="6.6" fill="#f4f8fd" stroke="#6a9ad6" stroke-width="1"/><path d="M93.4,411 h15.2 M94.6,414.4 h12.8 M104.6,405.2 q2,6 0,11.6" stroke="#a9c6ea" stroke-width="0.7" fill="none"/><path d="M96.6,407.4 l3.6,7.6 l3,-7.6 l2.4,0.6" stroke="#3b4a60" stroke-width="1" fill="none"/><circle cx="96.6" cy="407.4" r="1" fill="#fff" stroke="#3b4a60" stroke-width="0.7"/><circle cx="103.2" cy="407.4" r="1" fill="#fff" stroke="#3b4a60" stroke-width="0.7"/><circle cx="100.2" cy="415" r="1" fill="#fff" stroke="#3b4a60" stroke-width="0.7"/>
<path d="M116,429 h5.4" stroke="#b08c55" stroke-width="1.5" fill="none"/><path d="M126.6,425.7 q-5.2,-0.2 -5.2,3.3 q0,3.5 5.2,3.3" stroke="#b08c55" stroke-width="1.5" fill="none"/>
<path d="M116,447 h5.4" stroke="#9a6a1c" stroke-width="1.5" fill="none"/><path d="M126.6,443.7 q-5.2,-0.2 -5.2,3.3 q0,3.5 5.2,3.3" stroke="#9a6a1c" stroke-width="1.5" fill="none"/>
<path d="M116,465 h5.4" stroke="#9a6a1c" stroke-width="1.5" fill="none"/><path d="M126.6,461.7 q-5.2,-0.2 -5.2,3.3 q0,3.5 5.2,3.3" stroke="#9a6a1c" stroke-width="1.5" fill="none"/>
<path d="M54,543 l5,-5.5 l6,3 l-1.5,6.5 z" fill="#e23b3b"/><path d="M55.5,539 l4.5,-3.5 l5,2.5 l-3,3 z" fill="#f2d43a"/><path d="M56,541 l4,-2.5 l5,2.5 l-4,2.5 z" fill="#4f86c6"/><path d="M62.5,541.5 l5.5,-6" stroke="#d99a3c" stroke-width="1.8" stroke-linecap="round"/><path d="M58.5,542.5 l4,-3.5 l3.5,3.5 l-3.6,4.4 z" fill="#e8b878" stroke="#a87a3a" stroke-width="0.7"/>
<rect x="84.5" y="540.5" width="8" height="8" fill="none" stroke="#8a8a8a" stroke-width="0.9"/><rect x="87" y="537.5" width="8.5" height="9" fill="#f4f4f4" stroke="#777" stroke-width="0.9"/><rect x="89.6" y="535" width="5.6" height="9.6" fill="#f4f4f4" stroke="#777" stroke-width="0.9"/><path d="M90.8,541 v-5.6 q0,-1.8 1.4,-1.8 q1.4,0 1.4,1.8 v6" stroke="#3f6fae" stroke-width="1" fill="none"/><rect x="92" y="543" width="6" height="6" rx="1" fill="#5d9b50"/><circle cx="95" cy="546" r="1.7" fill="#d8ecd4"/>
<path d="M113.8,541.3 q7,-6.4 14.4,0 q-7,6 -14.4,0 z" fill="#f2f2f2" stroke="#9a9a9a" stroke-width="0.9"/><path d="M114,538.6 q7,-5.4 14,-0.6" stroke="#b5b5b5" stroke-width="0.8" fill="none"/><circle cx="121" cy="540.8" r="3.3" fill="#5f90cf" stroke="#3d6eae" stroke-width="0.6"/><circle cx="121" cy="540.4" r="1.3" fill="#1c2a40"/><path d="M125,544.6 h5.6 l-2.8,4 z" fill="#9a9a9a"/>
<path d="M144.3,534.5 h14 l-5.3,6.6 v6.6 l-3.4,-1.6 v-5 z" fill="#6da0dd" stroke="#3d6eae" stroke-width="0.9" stroke-linejoin="round"/><path d="M144.60000000000002,534.8 h13.4" stroke="#f6dc3c" stroke-width="2"/>
<text x="180.5" y="543.6" font-size="17" fill="#6a2a7a" font-family="Liberation Serif, serif">ε</text><path d="M188,542.4 h7 l-2,3 v3.6 h-3 v-3.6 z" fill="#e8e8e8" stroke="#9a9a9a" stroke-width="0.8"/>
<path d="M197.2,542.6 h7.6 l-3.8,6.6 z" fill="#6b6b6b"/>
<path d="M217.5,535.6 h4 M218.0,535.6 v11 M218.0,540.1 h3 M218.0,545.6 h3" stroke="#9a9a9a" stroke-width="0.9" fill="none"/><rect x="220.5" y="538.6" width="2.8" height="2.8" fill="#fff" stroke="#f39a1d" stroke-width="1"/><rect x="220.5" y="544.1" width="2.8" height="2.8" fill="#fff" stroke="#f39a1d" stroke-width="1"/><path d="M227.0,547.6 l5,-5.6 h-3 v-8 h-4 v8 h-3 z" fill="#4f86c6" stroke="#2f5c96" stroke-width="0.7" stroke-linejoin="round"/>
<path d="M247.5,535.6 h4 M248.0,535.6 v11 M248.0,540.1 h3 M248.0,545.6 h3" stroke="#9a9a9a" stroke-width="0.9" fill="none"/><rect x="250.5" y="538.6" width="2.8" height="2.8" fill="#fff" stroke="#f39a1d" stroke-width="1"/><rect x="250.5" y="544.1" width="2.8" height="2.8" fill="#fff" stroke="#f39a1d" stroke-width="1"/><path d="M257.0,533.6 l5,5.6 h-3 v8 h-4 v-8 h-3 z" fill="#4f86c6" stroke="#2f5c96" stroke-width="0.7" stroke-linejoin="round"/>
<rect x="276.2" y="535.2" width="11" height="11" fill="#f6f6f6" stroke="#777" stroke-width="1"/><rect x="283.5" y="543.6" width="7" height="5.6" rx="1" fill="#e1202a"/><path d="M285,546.4 h4" stroke="#fff" stroke-width="1.3"/>
<path d="M78.6,566.2 l2.6,3.2 l4.6,-6.8" stroke="#8a8a8a" stroke-width="1.5" fill="none" stroke-linecap="round" stroke-linejoin="round"/>
<path d="M54.8,582.2 l7.4,4.3 l-7.4,4.3 z" fill="#8c8c8c"/>
<rect x="102" y="578" width="4" height="4" fill="#2c4364"/><rect x="106" y="578" width="4" height="4" fill="#7fa8dc"/><rect x="110" y="578" width="4" height="4" fill="#2c4364"/><rect x="114" y="578" width="4" height="4" fill="#2c4364"/><rect x="102" y="582" width="4" height="4" fill="#7fa8dc"/><rect x="106" y="582" width="4" height="4" fill="#4f7fc0"/><rect x="110" y="582" width="4" height="4" fill="#7fa8dc"/><rect x="114" y="582" width="4" height="4" fill="#7fa8dc"/><rect x="102" y="586" width="4" height="4" fill="#2c4364"/><rect x="106" y="586" width="4" height="4" fill="#2c4364"/><rect x="110" y="586" width="4" height="4" fill="#7fa8dc"/><rect x="102" y="590" width="4" height="4" fill="#2c4364"/><rect x="106" y="590" width="4" height="4" fill="#7fa8dc"/>
<rect x="7.8" y="138.3" width="2" height="2" fill="#b6b6b6"/><rect x="7.0" y="137.5" width="1.5" height="1.5" fill="#f4f4f4"/><rect x="10.7" y="140.7" width="2" height="2" fill="#b6b6b6"/><rect x="9.8" y="139.9" width="1.5" height="1.5" fill="#f4f4f4"/><rect x="13.5" y="138.3" width="2" height="2" fill="#b6b6b6"/><rect x="12.7" y="137.5" width="1.5" height="1.5" fill="#f4f4f4"/><rect x="16.4" y="140.7" width="2" height="2" fill="#b6b6b6"/><rect x="15.6" y="139.9" width="1.5" height="1.5" fill="#f4f4f4"/><rect x="19.2" y="138.3" width="2" height="2" fill="#b6b6b6"/><rect x="18.4" y="137.5" width="1.5" height="1.5" fill="#f4f4f4"/><rect x="22.1" y="140.7" width="2" height="2" fill="#b6b6b6"/><rect x="21.2" y="139.9" width="1.5" height="1.5" fill="#f4f4f4"/><rect x="24.9" y="138.3" width="2" height="2" fill="#b6b6b6"/><rect x="24.1" y="137.5" width="1.5" height="1.5" fill="#f4f4f4"/><rect x="27.8" y="140.7" width="2" height="2" fill="#b6b6b6"/><rect x="26.9" y="139.9" width="1.5" height="1.5" fill="#f4f4f4"/><rect x="30.6" y="138.3" width="2" height="2" fill="#b6b6b6"/><rect x="29.8" y="137.5" width="1.5" height="1.5" fill="#f4f4f4"/><rect x="33.5" y="140.7" width="2" height="2" fill="#b6b6b6"/><rect x="32.7" y="139.9" width="1.5" height="1.5" fill="#f4f4f4"/><rect x="36.3" y="138.3" width="2" height="2" fill="#b6b6b6"/><rect x="35.5" y="137.5" width="1.5" height="1.5" fill="#f4f4f4"/><rect x="39.1" y="140.7" width="2" height="2" fill="#b6b6b6"/><rect x="38.4" y="139.9" width="1.5" height="1.5" fill="#f4f4f4"/>
<path d="M21.5,149.5 q4,-1.5 8,-1 q3.5,0 6,1.5 l-1,6 q-1,3 -4,3.5 q-4,0 -6.5,-2 z" fill="#f8f8f8" stroke="#555" stroke-width="1" stroke-linejoin="round"/><path d="M12,149.5 l5.5,20.5" stroke="#3f6fae" stroke-width="1.1"/><path d="M22,170 l6,-16 l5,-0.8" stroke="#e8202a" stroke-width="1.2" fill="none"/><g fill="#fff" stroke-width="0.9"><circle cx="12" cy="149.5" r="1.3" stroke="#3f6fae"/><circle cx="17.5" cy="170" r="1.3" stroke="#3f6fae"/><circle cx="22" cy="170" r="1.3" stroke="#e8202a"/><circle cx="28" cy="154" r="1.3" stroke="#e8202a"/><circle cx="33" cy="153.2" r="1.3" stroke="#e8202a"/><circle cx="31" cy="161" r="1.2" stroke="#e8202a"/><circle cx="29.5" cy="165.5" r="1.2" stroke="#3f6fae"/><circle cx="27.5" cy="170" r="1.2" stroke="#3f6fae"/></g>
<rect x="7.8" y="185.3" width="2" height="2" fill="#b6b6b6"/><rect x="7.0" y="184.5" width="1.5" height="1.5" fill="#f4f4f4"/><rect x="10.7" y="187.7" width="2" height="2" fill="#b6b6b6"/><rect x="9.8" y="186.9" width="1.5" height="1.5" fill="#f4f4f4"/><rect x="13.5" y="185.3" width="2" height="2" fill="#b6b6b6"/><rect x="12.7" y="184.5" width="1.5" height="1.5" fill="#f4f4f4"/><rect x="16.4" y="187.7" width="2" height="2" fill="#b6b6b6"/><rect x="15.6" y="186.9" width="1.5" height="1.5" fill="#f4f4f4"/><rect x="19.2" y="185.3" width="2" height="2" fill="#b6b6b6"/><rect x="18.4" y="184.5" width="1.5" height="1.5" fill="#f4f4f4"/><rect x="22.1" y="187.7" width="2" height="2" fill="#b6b6b6"/><rect x="21.2" y="186.9" width="1.5" height="1.5" fill="#f4f4f4"/><rect x="24.9" y="185.3" width="2" height="2" fill="#b6b6b6"/><rect x="24.1" y="184.5" width="1.5" height="1.5" fill="#f4f4f4"/><rect x="27.8" y="187.7" width="2" height="2" fill="#b6b6b6"/><rect x="26.9" y="186.9" width="1.5" height="1.5" fill="#f4f4f4"/><rect x="30.6" y="185.3" width="2" height="2" fill="#b6b6b6"/><rect x="29.8" y="184.5" width="1.5" height="1.5" fill="#f4f4f4"/><rect x="33.5" y="187.7" width="2" height="2" fill="#b6b6b6"/><rect x="32.7" y="186.9" width="1.5" height="1.5" fill="#f4f4f4"/><rect x="36.3" y="185.3" width="2" height="2" fill="#b6b6b6"/><rect x="35.5" y="184.5" width="1.5" height="1.5" fill="#f4f4f4"/><rect x="39.1" y="187.7" width="2" height="2" fill="#b6b6b6"/><rect x="38.4" y="186.9" width="1.5" height="1.5" fill="#f4f4f4"/>
<path d="M7.4,196.6 l6.2,15 l6.4,-15 h6.6" stroke="#2a4468" stroke-width="1.5" fill="none" stroke-linejoin="round"/><g fill="#e6edf6" stroke="#2a4468" stroke-width="1.2"><circle cx="7.4" cy="196.6" r="1.9"/><circle cx="20.0" cy="196.6" r="1.9"/><circle cx="27.0" cy="196.6" r="1.9"/><circle cx="13.6" cy="211.8" r="1.9"/></g>
<rect x="19.4" y="210.1" width="9.3" height="9.3" rx="2" fill="#5d9b50" stroke="#4a8340" stroke-width="0.6"/><path d="M24.049999999999997,212.29999999999998 v4.9 M21.599999999999998,214.75 h4.9" stroke="#fff" stroke-width="2.1" fill="none"/>
<rect x="5.0" y="233.0" width="6.6" height="6.6" fill="#243b5e"/><rect x="11.6" y="233.0" width="6.6" height="6.6" fill="#4f7fc0"/><rect x="18.2" y="233.0" width="6.6" height="6.6" fill="#243b5e"/><rect x="5.0" y="239.6" width="6.6" height="6.6" fill="#7fa8dc"/><rect x="11.6" y="239.6" width="6.6" height="6.6" fill="#243b5e"/><rect x="18.2" y="239.6" width="6.6" height="6.6" fill="#6f9bd3"/><rect x="5.0" y="246.2" width="6.6" height="6.6" fill="#243b5e"/><rect x="11.6" y="246.2" width="6.6" height="6.6" fill="#6f9bd3"/><rect x="18.2" y="246.2" width="6.6" height="6.6" fill="#9cbce6"/>
<rect x="19.4" y="247.9" width="9.3" height="9.3" rx="2" fill="#5d9b50" stroke="#4a8340" stroke-width="0.6"/><path d="M24.049999999999997,250.1 v4.9 M21.599999999999998,252.55 h4.9" stroke="#fff" stroke-width="2.1" fill="none"/>
<path d="M5.4,294.6 q1.6,-9.6 8.4,-15.8 q6,-5.6 14.2,-7.6 q0.2,5.6 -3.8,9.8 q-4.8,4.6 -11.2,6 q-4.2,2.6 -7.6,7.6 z" fill="#6f9bd3" stroke="#2f4c78" stroke-width="1" stroke-linejoin="round"/><path d="M6.4,293 q6,-10.4 19.6,-19" stroke="#d4e2f4" stroke-width="1" fill="none"/><path d="M12,283 l8,-3 M15,279 l7,-3" stroke="#d4e2f4" stroke-width="0.7"/>
<rect x="19.4" y="286.1" width="9.3" height="9.3" rx="2" fill="#5d9b50" stroke="#4a8340" stroke-width="0.6"/><path d="M24.049999999999997,288.3 v4.9 M21.599999999999998,290.75 h4.9" stroke="#fff" stroke-width="2.1" fill="none"/>
<g transform="translate(11.2,318.6) scale(1.22)"><path d="M3.2,-7.2 q-3.2,0.6 -3,4.6 q0.2,3.6 2.6,6 q1.4,0.8 2.2,-0.6 q1,3.6 3.2,4.6 q2.4,0.6 2.8,-1.8 q0.2,-1.8 0.6,-2.6 q2.4,0.6 3.6,-0.6 q-1.6,-0.2 -2.4,-1 q2.4,-3.2 2,-6.6 q-0.8,-2.8 -4.4,-2.6 q-1.6,0 -2.6,0.6 q-2,-0.8 -4.6,0 z" fill="#5f8dc4" stroke="#30527f" stroke-width="0.9" stroke-linejoin="round"/><path d="M6.4,-6 q-1.2,2.4 -0.6,5.4 q0.4,2 -0.6,4.2 M9.6,-6.2 q1.4,2.6 0.6,6.4 q-0.2,1.2 0.4,2.4" stroke="#30527f" stroke-width="0.8" fill="none"/><circle cx="11.2" cy="-2.4" r="0.6" fill="#fff"/></g>
<rect x="25.6" y="323.7" width="9.3" height="9.3" rx="2" fill="#5d9b50" stroke="#4a8340" stroke-width="0.6"/><path d="M30.25,325.9 v4.9 M27.8,328.34999999999997 h4.9" stroke="#fff" stroke-width="2.1" fill="none"/>
<path d="M37,324 h8 l-4.0,6.6 z" fill="#6b6b6b"/>
<ellipse cx="16.6" cy="357.4" rx="11.6" ry="10.4" fill="#86a9d6" stroke="#4a78b4" stroke-width="1"/><path d="M9.600000000000001,352.4 q3,-3 6.4,-1.6 q-0.6,4.4 -3,7 q-3.2,-0.8 -3.4,-5.4 z M18.200000000000003,351.4 q4.6,-1.6 7,1.6 q0,4.6 -2.4,8.4 q-2.4,-1.4 -3,-4.6 z M13.600000000000001,360.4 q2.4,0 3,3 q-1.4,2.4 -3,1.6 z" fill="#e1ebf7"/><path d="M5.000000000000002,357.4 h23.2 M16.6,347.0 v20.8" stroke="#5c88c0" stroke-width="0.6"/>
<rect x="19.4" y="362.1" width="9.3" height="9.3" rx="2" fill="#5d9b50" stroke="#4a8340" stroke-width="0.6"/><path d="M24.049999999999997,364.3 v4.9 M21.599999999999998,366.75 h4.9" stroke="#fff" stroke-width="2.1" fill="none"/>
<ellipse cx="16.8" cy="395.2" rx="11.8" ry="10.4" fill="#1f355c" stroke="#152540" stroke-width="0.9"/><path d="M6.4,390.59999999999997 h20.8 M5.200000000000001,395.2 h23.2 M6.4,399.8 h20.8" stroke="#a8c6ee" stroke-width="2.4"/><ellipse cx="16.8" cy="395.2" rx="5" ry="10.2" fill="none" stroke="#152540" stroke-width="1.5"/>
<rect x="19.4" y="400.1" width="9.3" height="9.3" rx="2" fill="#5d9b50" stroke="#4a8340" stroke-width="0.6"/><path d="M24.049999999999997,402.3 v4.9 M21.599999999999998,404.75 h4.9" stroke="#fff" stroke-width="2.1" fill="none"/>
<ellipse cx="16.6" cy="433" rx="11.6" ry="10.4" fill="#f2f6fc" stroke="#5c8cc8" stroke-width="1.1"/><path d="M5.000000000000002,433 h23.2 M7.000000000000002,438.4 h19.2 M7.000000000000002,427.6 h19.2 M22.200000000000003,424 q3,9 0,18 M11.000000000000002,424 q-3,9 0,18" stroke="#a9c6ea" stroke-width="0.8" fill="none"/><path d="M10.200000000000001,427.6 l5.4,11.4 l4.6,-11.4 l3.6,0.6" stroke="#2e3f58" stroke-width="1.2" fill="none"/><circle cx="10.200000000000001" cy="427.6" r="1.5" fill="#fff" stroke="#2e3f58" stroke-width="0.9"/><circle cx="20.200000000000003" cy="427.6" r="1.5" fill="#fff" stroke="#2e3f58" stroke-width="0.9"/><circle cx="15.600000000000001" cy="439" r="1.5" fill="#fff" stroke="#2e3f58" stroke-width="0.9"/>
<rect x="19.4" y="437.9" width="9.3" height="9.3" rx="2" fill="#5d9b50" stroke="#4a8340" stroke-width="0.6"/><path d="M24.049999999999997,440.09999999999997 v4.9 M21.599999999999998,442.54999999999995 h4.9" stroke="#fff" stroke-width="2.1" fill="none"/>
<path d="M15.6,461.2 q5.4,0.4 5.4,6.2 q-0.4,7.4 -10.4,11.6 l-0.8,-1.6 q6,-3.4 6.4,-7.4 q-5.6,1 -5.8,-4 q0.2,-4.6 5.2,-4.8 z" fill="#3f6fae"/>
<rect x="19.4" y="476.3" width="9.3" height="9.3" rx="2" fill="#5d9b50" stroke="#4a8340" stroke-width="0.6"/><path d="M24.049999999999997,478.5 v4.9 M21.599999999999998,480.95 h4.9" stroke="#fff" stroke-width="2.1" fill="none"/>
<rect x="6.5" y="499.5" width="21" height="21" rx="2" fill="#dfe9f6" stroke="#5c88c0" stroke-width="1"/><path d="M9,502.4 l6.4,15.6 l6.4,-15.6 h5" stroke="#2a4468" stroke-width="1.3" fill="none"/><g fill="#e6edf6" stroke="#2a4468" stroke-width="1"><circle cx="9" cy="502.4" r="1.6"/><circle cx="21.8" cy="502.4" r="1.6"/><circle cx="15.4" cy="518" r="1.6"/></g>
<rect x="19.4" y="512.9" width="9.3" height="9.3" rx="2" fill="#5d9b50" stroke="#4a8340" stroke-width="0.6"/><path d="M24.049999999999997,515.1 v4.9 M21.599999999999998,517.55 h4.9" stroke="#fff" stroke-width="2.1" fill="none"/>
<path d="M13.4,539.8000000000001 l6.2,15 l6.4,-15 h6.6" stroke="#2a4468" stroke-width="1.5" fill="none" stroke-linejoin="round"/><g fill="#e6edf6" stroke="#2a4468" stroke-width="1.2"><circle cx="13.4" cy="539.8000000000001" r="1.9"/><circle cx="26.0" cy="539.8000000000001" r="1.9"/><circle cx="33.0" cy="539.8000000000001" r="1.9"/><circle cx="19.6" cy="555.0" r="1.9"/></g>
<g opacity="1.0"><rect x="26" y="551.4" width="9.6" height="9.6" rx="1.8" fill="#c9a91c" stroke="#b8981a" stroke-width="0.5"/><g stroke="#fff" stroke-width="0.87" fill="none"><path d="M30.8,552.36 v7.68 M27.48,554.28 l6.63,3.84 M27.48,558.12 l6.63,-3.84"/></g><circle cx="30.8" cy="556.1999999999999" r="1.75" fill="#c9a91c" stroke="#fff" stroke-width="0.87"/></g>
<path d="M37.4,553.2 h8 l-4.0,6.6 z" fill="#6b6b6b"/>
</svg>

<div class="abs" id="mapborder"></div>
<div class="abs" id="map">
<svg class="abs" style="left:0;top:0" width="878" height="601" viewBox="343 132 878 601">
<path d="M620.7,691.1 L620.7,693.1 L617.0,697.3 L625.4,701.7 L629.6,709.2 L633.7,719.0 L638.7,723.1 L636.5,725.9 L637.4,734.3 L1222,733 L1222,131 L620.7,131 Z" fill="#c69c5e"/>
<g fill="none" stroke="#261f12" stroke-width="1.25" stroke-linejoin="round">
<path d="M920.3,147.6 L923.4,147.6 L929.3,148.6 L935.7,152.0 L943.4,157.1 L947.3,161.0 L952.9,165.6 L992.2,165.6 L992.8,174.3 L1006.1,174.6 L1006.6,183.6 L1061.6,183.9"/>
<path d="M1050.8,132.2 L1057.8,133.2 L1058.5,141.7 L1055.2,149.4 L1057.8,155.8 L1061.6,162.3 L1062.9,171.3 L1066.0,177.7 L1061.6,183.9 L1064.2,189.3 L1070.6,194.9"/>
<path d="M1070.6,194.9 L1089.9,192.6 L1097.6,193.1 L1104.0,188.7 L1109.2,184.6 L1115.6,189.3 L1123.3,189.8 L1123.8,165.6 L1164.4,165.3 L1164.4,130.1"/>
<path d="M1123.8,183.9 L1222.3,184.1"/>
<path d="M1115.6,190.5 L1120.7,198.2 L1128.5,202.1 L1135.4,207.8 L1134.9,222.7 L1136.7,227.8 L1134.9,232.4 L1141.3,236.0 L1151.6,237.6 L1158.8,240.1"/>
<path d="M1158.8,240.1 L1160.6,236.8 L1167.0,235.5 L1177.3,232.9 L1186.3,229.1 L1187.6,223.9 L1195.3,221.4 L1200.4,216.2 L1203.0,208.5 L1210.7,202.1 L1218.4,198.2 L1222.3,199.5"/>
<path d="M1158.8,240.1 L1164.4,245.8 L1167.8,252.2 L1167.0,257.4 L1161.9,262.5 L1151.6,266.4 L1141.3,267.6 L1131.0,266.4 L1118.2,268.4 L1107.9,269.7 L1101.5,267.6 L1093.8,274.1 L1072.4,276.6 L1060.3,278.7 L1043.6,283.1 L1037.2,288.2 L1020.5,290.3 L1007.7,291.5 L998.7,286.9 L991.0,286.9 L965.3,295.1 L956.3,295.4 L948.6,295.4 L940.8,300.5 L935.7,299.8 L933.1,294.6 L923.4,291.5 L920.3,291.0"/>
<path d="M1167.0,259.2 L1222.3,259.4"/>
<path d="M1071.1,194.9 L1072.4,256.1 L1072.4,276.6"/>
<path d="M920.3,255.6 L1072.4,256.3"/>
<path d="M1059.6,279.2 L1058.5,324.9"/>
<path d="M1117.4,268.9 L1117.4,301.3 L1136.4,301.6 L1136.7,310.0 L1147.0,310.3 L1147.2,324.9"/>
<path d="M964.5,295.9 L965.3,304.9 L971.7,310.0 L970.4,317.8 L967.1,324.9"/>
<path d="M991.7,287.4 L1000.0,292.1 L1007.7,297.2 L1012.8,301.0 L1016.7,304.9 L1021.0,309.5 L1017.9,313.9 L1010.2,316.5 L1006.4,321.6 L1005.1,324.9"/>
<path d="M923.4,136.6 L924.1,139.1 L923.4,143.0"/>
<path d="M971.7,315.0 L967.8,321.4 L962.7,326.6 L957.5,331.7 L952.9,333.5 L952.4,339.4 L956.3,342.8 L965.3,342.8 L974.3,345.8 L983.2,351.0 L984.5,355.1 L1007.1,355.1"/>
<path d="M1008.9,315.0 L1005.1,322.7 L1003.8,330.4 L1001.8,338.1 L1005.1,343.3 L1008.9,347.1 L1011.5,351.0 L1007.1,355.1 L1008.4,366.4 L1011.5,375.4 L1015.4,379.3 L1020.0,383.1"/>
<path d="M1007.1,355.6 L1033.4,356.9 L1053.9,356.9 L1080.9,356.1"/>
<path d="M1058.3,315.0 L1058.3,337.4 L1071.1,337.6 L1071.1,346.6 L1083.7,346.9 L1084.0,355.6 L1080.9,356.1 L1081.7,363.8 L1093.0,364.3"/>
<path d="M1081.7,363.8 L1145.2,363.8 L1212.0,363.8 L1219.7,365.1 L1222.3,367.7"/>
<path d="M1147.0,315.0 L1146.4,340.7 L1145.4,356.1 L1145.4,363.8"/>
<path d="M1222.3,326.6 L1203.0,327.3 L1194.0,328.4 L1194.0,337.4 L1198.4,337.6 L1198.6,343.3 L1208.9,343.8 L1209.2,354.8 L1212.2,355.3 L1212.5,363.8"/>
<path d="M1093.0,364.3 L1093.0,382.3 L1094.5,383.1 L1094.5,434.5 L1094.5,471.0"/>
<path d="M920.3,381.8 L946.0,382.3 L1020.0,383.1 L1018.5,387.0 L1019.0,421.7 L1056.5,422.2 L1056.7,426.3 L1069.3,426.8 L1069.6,435.0 L1094.5,434.8"/>
<path d="M1018.7,408.8 L973.0,409.6 L972.7,418.1 L956.8,418.3 L956.5,426.8 L920.3,426.5"/>
<path d="M944.2,427.1 L944.2,453.0 L956.5,453.5 L956.8,471.3 L981.2,471.8 L981.4,480.8 L1019.2,481.3 L1019.5,489.8 L1031.8,490.3 L1032.1,498.8 L1069.3,499.0 L1081.4,498.5 L1081.7,472.3 L1094.5,471.0"/>
<path d="M1094.5,471.0 L1181.1,471.0 L1181.4,462.8 L1205.6,462.8 L1222.3,463.3"/>
<path d="M1069.3,499.0 L1069.6,514.9"/>
<path d="M920.3,507.0 L987.1,507.2 L1025.7,507.8 L1069.3,507.8"/>
<path d="M1069.3,505.0 L1069.6,552.5 L1065.2,553.3 L1065.2,577.0 L1064.7,597.5 L1124.6,597.5 L1124.9,633.5 L1125.4,674.6"/>
<path d="M920.3,597.3 L967.1,597.8 L967.1,674.9"/>
<path d="M907.4,674.9 L1222.3,675.1"/>
<path d="M1058.5,675.1 L1058.5,704.9 L1058.5,736.3"/>
<path d="M1128.5,675.1 L1128.5,704.9 L1128.5,736.3"/>
<path d="M620.7,691.1 L620.7,693.1 L617.0,697.3 L625.4,701.7 L629.6,709.2 L633.7,719.0 L638.7,723.1 L636.5,725.9 L637.4,734.3"/>
<path d="M637.4,730.1 L668.0,730.1 L668.5,734.3"/>
<path d="M675.5,691.1 L675.5,693.1 L678.3,696.7 L677.4,702.3 L679.6,706.4 L675.5,713.4 L673.5,716.2 L678.3,720.3 L679.6,725.9 L683.8,731.5 L684.4,734.3"/>
<path d="M908.6,696.5 L908.4,733"/>
<path d="M1221.5,392 L1218.2,393.5 L1216.5,394.7 L1213.8,393.8 L1212.3,395.2 L1212.5,396.8 L1214.5,398.5 L1217.9,399.5 L1221.5,400.4"/>
<path d="M1221.5,429.6 L1217.9,432.8 L1214.5,437.4 L1214.4,440.2 L1221.5,440.5"/>
</g></svg>

</div>

<div class="abs" id="status"></div>
<div class="abs" style="left:0;top:733px;width:46px;height:1px;background:linear-gradient(90deg,#e6e6e6 0,#dddddd 35%,#cdcdcd 85%,#cbcbcb 100%)"></div>
<div class="t" style="left:270px;top:747px">Coordinate</div>
<div class="inp" style="left:337px;top:745px;width:127px;height:21px"></div>
<div class="t" style="left:335px;top:747px;width:127px;text-align:center">-126.433,44.807</div>
<div class="sbtn" style="left:464px;top:743px;width:26px;height:26px"></div>
<div class="t" style="left:499px;top:746px">Scale</div>
<div class="inp" style="left:535px;top:743px;width:118px;height:22px;border-radius:3px 5px 5px 3px"></div>
<div class="abs" style="left:635px;top:743px;width:18px;height:22px;border-radius:0 5px 5px 0;background:linear-gradient(#b4b4b7,#98989c)"></div>
<div class="t" style="left:538px;top:747px">1:1,542,048</div>
<div class="sbtn" style="left:653px;top:742px;width:26px;height:26px"></div>
<div class="t" style="left:688px;top:747px">Magnifier</div>
<div class="inp" style="left:746px;top:745px;width:64px;height:22px"></div>
<div class="t" style="left:749px;top:748px">100%</div>
<div class="abs" style="left:813px;top:746px;width:13px;height:22px;border-radius:5px;background:#fff;border:1px solid #c6c6c6"></div>
<div class="t" style="left:836px;top:747px">Rotation</div>
<div class="inp" style="left:895px;top:745px;width:64px;height:22px"></div>
<div class="t" style="left:898px;top:748px">0.0</div>
<div class="abs" style="left:962px;top:746px;width:13px;height:22px;border-radius:5px;background:#fff;border:1px solid #c6c6c6"></div>
<div class="cb" style="left:982px;top:749px;background:linear-gradient(#aeaeb1,#97979b)"></div>
<div class="t" style="left:1000px;top:747px">Render</div>
<div class="sbtn" style="left:1045px;top:747px;width:107px;height:18px"></div>
<div class="t" style="left:1070px;top:747px">EPSG:4326</div>
<div class="sbtn" style="left:1158px;top:747px;width:38px;height:18px"></div>
<svg class="abs" style="left:0;top:733px;pointer-events:none" width="1222" height="45" viewBox="0 733 1222 45">
<g transform="translate(476.6,755.8) rotate(-32)"><rect x="-4.6" y="-7" width="9.2" height="13.6" rx="4.4" fill="#e4e4e4" stroke="#1e1e1e" stroke-width="1.5"/><path d="M-4.6,-1.6 h9.2 M0,-7 v5.4" stroke="#2a2a2a" stroke-width="1"/><rect x="-1.2" y="-6" width="2.4" height="3.6" rx="1" fill="#2a2a2a"/><circle cx="0.6" cy="3" r="1.6" fill="none" stroke="#555" stroke-width="0.8"/></g><path d="M469.4,757 l3.4,-1 M481,750.4 l3,-2.4 M479.6,748.6 l1.4,-1.4" stroke="#555" stroke-width="0.8" stroke-dasharray="1.2 0.8"/>
<path d="M640.9,752.9 l3.2,3.2 l3.2,-3.2" stroke="#fff" stroke-width="1.4" fill="none" stroke-linecap="round" stroke-linejoin="round"/>
<path d="M662.2,756 v-3.4 q0,-4.4 3.7,-4.4 q3.7,0 3.7,4.4 v3.4" stroke="#8d8d8d" stroke-width="1.5" fill="none"/><rect x="659.8" y="755.6" width="12.2" height="7.4" rx="1.6" fill="#686868"/>
<path d="M816.9,753.4 l2.6,-2.6 l2.6,2.6 M816.9,759.8 l2.6,2.6 l2.6,-2.6" stroke="#4a4a4a" stroke-width="1.3" fill="none" stroke-linecap="round" stroke-linejoin="round"/>
<path d="M965.8,753.4 l2.6,-2.6 l2.6,2.6 M965.8,759.8 l2.6,2.6 l2.6,-2.6" stroke="#4a4a4a" stroke-width="1.3" fill="none" stroke-linecap="round" stroke-linejoin="round"/>
<path d="M985.6,756.4 l2.7,3.2 l4.6,-7" stroke="#fff" stroke-width="1.6" fill="none" stroke-linecap="round" stroke-linejoin="round"/>
<g fill="none"><circle cx="1058" cy="755.7" r="6.8" stroke-width="2.1" stroke="#868686"/><ellipse cx="1058" cy="755.7" rx="3.3" ry="6.8" stroke-width="1" stroke="#8a8a8a"/><path d="M1051,755.7 h14 M1058,748.7 v14" stroke-width="1" stroke="#8a8a8a"/><rect x="1054.4" y="752.1" width="7.2" height="7.2" rx="1.8" stroke-width="1.6" stroke="#787878" fill="#e2e2e2" fill-opacity="0.7"/></g>
<ellipse cx="1171" cy="755.4" rx="8.1" ry="6.5" fill="#666"/><path d="M1172,760.6 q2.4,2.6 6.2,3.4 q-3.2,-2.2 -3.4,-5 z" fill="#666"/><circle cx="1167" cy="755.4" r="1.25" fill="#fff"/><circle cx="1171" cy="755.4" r="1.25" fill="#fff"/><circle cx="1175" cy="755.4" r="1.25" fill="#fff"/>
<path d="M1211,778 l11,-11 M1214.5,778 l7.5,-7.5 M1218,778 l4,-4" stroke="#9a9a9a" stroke-width="1"/>
</svg>

<div class="abs" id="dlgshadow"></div>
<div class="abs" id="dlg">
  <div class="abs" id="dlgtitle"></div>
  <div class="tl" style="left:8px;top:5px;background:#8b8b8f;border:1px solid #7c7c80"></div>
  <div class="tl" style="left:28px;top:5px;background:#d3d3d3;border:1px solid #c4c4c4"></div>
  <div class="tl" style="left:48px;top:5px;background:#8b8b8f;border:1px solid #7c7c80"></div>
  <div class="t" style="left:236px;top:4px;color:#454545;letter-spacing:0.3px">Save vector layer as...</div>

  <div class="t" style="left:32px;top:55px">Format</div>
  <div class="combo ring" style="left:107px;top:53px;width:454px;height:23px"><div class="arr"></div></div>
  <div class="t" style="left:117px;top:55px">ESRI Shapefile</div>

  <div class="t" style="left:32px;top:90px">File name</div>
  <div class="inp" style="left:109px;top:88px;width:368px;height:21px"></div>
  <div class="t" style="left:111px;top:90px">/Users/may/Desktop/counties.shp</div>
  <div class="btn" style="left:485px;top:88px;width:74px;height:21px">Browse</div>

  <div class="t" style="left:32px;top:131px">Layer name</div>
  <div class="inp" style="left:109px;top:129px;width:450px;height:21px;border-color:#cbcbcb;border-top-color:#c2c2c2"></div>

  <div class="t" style="left:32px;top:167px">CRS</div>
  <div class="combo" style="left:112px;top:162px;width:421px;height:26px;border-radius:5px;border:1px solid;border-color:#9a9a9a #8a8a8a #5e5e5e #8f8f8f;background:linear-gradient(#fff 0,#fdfdfd 50%,#f1f1f1 52%,#fafafa 100%);box-shadow:0 1px 1.5px rgba(0,0,0,.45)"><div class="arr" style="width:21px;background:linear-gradient(#d9dce2 0,#c9ced8 54%,#b4bfce 56%,#d6e2ee 100%);border:1px solid;border-color:#2f4a6c #5a6a82 #55595f transparent;border-radius:0 5px 5px 0"></div></div>
  <div class="t" style="left:120px;top:165px">Selected CRS (EPSG:4326, WGS 84)</div>
  <div class="sbtn" style="left:533px;top:162px;width:26px;height:26px;background:linear-gradient(#eaeaea,#f4f4f4 40%);border-color:#a9a9a9"></div>

  <div class="abs" id="scroll" style="left:20px;top:214px;width:551px;height:380px;border:1px solid #a4a4a4;border-top-color:#8e8e8e;background:#ebebeb;overflow:hidden">
    <div class="abs" style="right:0;top:0;width:15px;height:379px;background:#fafafa;border-left:1px solid #e8e8e8"></div>
    <div class="abs" style="left:538px;top:1px;width:8px;height:126px;border-radius:4px;background:#c1c1c1"></div>
    <div class="t" style="left:12px;top:15px">Encoding</div>
    <div class="combo" style="left:269px;top:14px;width:250px;height:21px;border-radius:5px"><div class="arr" style="width:17px"></div></div>
    <div class="t" style="left:278px;top:15px">System</div>
    <div class="cbo" style="left:12px;top:47px;width:14px;height:14px;border-color:#cdcdcd;background:#f5f5f5;border-radius:3.5px"></div>
    <div class="t" style="left:30px;top:45px;color:#8c8c8c">Save only selected features</div>
    <div class="t" style="left:34px;top:60px;font-weight:bold">Select fields to export and their export options</div>
    <div class="abs" style="left:12px;top:78px;width:510px;height:272px;border:1px solid #c6c6c6;border-radius:5px;background:#e3e3e3"></div>
    <div class="abs" id="tbl" style="left:25px;top:91px;width:484px;height:200px;border:1px solid #9f9f9f;border-top-color:#7f7f7f;background:#fff;overflow:hidden">
      <div class="abs" style="left:0;top:0;width:468px;height:20px;background:#e9e9e9"></div>
      <div class="abs" style="left:0;top:0;width:188px;height:20px;background:#f6f6f6"></div>
      <div class="abs" style="left:107px;top:2px;width:1px;height:17px;background:#dcdcdc"></div>
      <div class="abs" style="left:187px;top:2px;width:1px;height:17px;background:#dcdcdc"></div>
      <div class="abs" style="right:0;top:0;width:15px;height:200px;background:#fafafa;border-left:1px solid #ededed"></div>
      <div class="abs" style="left:471px;top:1px;width:8px;height:122px;border-radius:4px;background:#c1c1c1"></div>
      <div class="t" style="left:0;top:2px;width:107px;text-align:center">Name</div>
      <div class="t" style="left:108px;top:2px;width:79px;text-align:center">Type</div>
      <div class="abs" style="left:0;top:20px;width:188px;height:180px;border-right:1px solid #b2b2b2;border-top:1px solid #b2b2b2"></div>
      <div class="abs" style="left:107px;top:20px;width:1px;height:180px;background:#b2b2b2"></div>
      <div class="abs" style="left:0;top:50px;width:188px;height:1px;background:#b2b2b2"></div>
<div class="cb" style="left:7px;top:28px"></div>
<div class="t" style="left:34px;top:27px">area</div>
<div class="t" style="left:113px;top:27px">xsd:decimal</div>
<div class="abs" style="left:0;top:80px;width:188px;height:1px;background:#b2b2b2"></div>
<div class="cb" style="left:7px;top:58px"></div>
<div class="t" style="left:34px;top:57px">perimeter</div>
<div class="t" style="left:113px;top:57px">xsd:decimal</div>
<div class="abs" style="left:0;top:110px;width:188px;height:1px;background:#b2b2b2"></div>
<div class="cb" style="left:7px;top:88px"></div>
<div class="t" style="left:34px;top:87px">countyp020</div>
<div class="t" style="left:113px;top:87px">xsd:decimal</div>
<div class="abs" style="left:0;top:140px;width:188px;height:1px;background:#b2b2b2"></div>
<div class="cb" style="left:7px;top:118px"></div>
<div class="t" style="left:34px;top:117px">state</div>
<div class="t" style="left:113px;top:117px">xsd:string</div>
<div class="abs" style="left:0;top:170px;width:188px;height:1px;background:#b2b2b2"></div>
<div class="cb" style="left:7px;top:148px"></div>
<div class="t" style="left:34px;top:147px">county</div>
<div class="t" style="left:113px;top:147px">xsd:string</div>
<div class="abs" style="left:0;top:200px;width:188px;height:1px;background:#b2b2b2"></div>
<div class="cb" style="left:7px;top:178px"></div>
<div class="t" style="left:34px;top:177px">fips</div>
<div class="t" style="left:113px;top:177px">xsd:string</div>

    </div>
    <div class="btn" style="left:31px;top:309px;width:229px;height:21px">Select All</div>
    <div class="btn" style="left:274px;top:309px;width:229px;height:21px">Deselect All</div>
    <div class="cb" style="left:12px;top:375px;width:14px;height:14px"></div>
    <div class="t" style="left:30px;top:373px">Add saved file to map</div>
  </div>

  <div class="btn" style="left:20px;top:614px;width:57px;height:21px">Help</div>
  <div class="btn" style="left:419px;top:614px;width:69px;height:21px">Cancel</div>
  <div class="btn" style="left:502px;top:614px;width:69px;height:21px;background:linear-gradient(#b0b0b4,#8b8b90);border-color:#939397;border-bottom-color:#77777c">OK</div>
<svg class="abs" style="left:0;top:0;pointer-events:none" width="591" height="654" viewBox="332 39 591 654">
<ellipse cx="557.2" cy="52.2" rx="3.9" ry="4.4" fill="#fbfbd8" stroke="#e3e34a" stroke-width="2"/><path d="M558.6,55 l3,2.2" stroke="#d6d63a" stroke-width="1.8" stroke-linecap="round"/><path d="M553.2,56.4 l7.6,-11" stroke="#2f8a35" stroke-width="1.7" stroke-linecap="round"/><path d="M552,58 l1.4,-3.2 l1.6,1.2 z" fill="#1d1d1d"/><path d="M559,44.4 l3,-0.6 l-0.2,3" stroke="#2f8a35" stroke-width="1.1" fill="#2f8a35"/><path d="M550.6,46.8 q0.4,-3.8 4,-4.6 q2.6,-0.2 4,2.6 q-4,0 -8,2 z" fill="#e0222c"/><path d="M550.4,47.2 q4,-2 8.2,-2.2" stroke="#fdfdfd" stroke-width="1.1" fill="none"/><circle cx="558.6" cy="44.6" r="0.9" fill="#fff"/>
<path d="M879.4,101.4 l3.2,-3.2 l3.2,3.2 M879.4,105.60000000000001 l3.2,3.2 l3.2,-3.2" stroke="#fff" stroke-width="1.4" fill="none" stroke-linecap="round" stroke-linejoin="round"/>
<path d="M860.4,276.2 l3,-2.7 l3,2.7 M860.4,280.6 l3,2.9 l3,-2.9" stroke="#fff" stroke-width="1.3" fill="none" stroke-linecap="round" stroke-linejoin="round"/>
<path d="M854.7,207.6 l2.3,4.3 h-4.6 z M854.7,220.3 l2.3,-4.2 h-4.6 z" fill="#0a0a0a"/>
<path d="M870.6,213.8 a7.6,7.2 0 0 0 15.2,0 z" fill="#a9c8ee" stroke="#6f9cd2" stroke-width="0.7"/><path d="M873,217.5 h10.4 M878.2,213.8 v7.2 M874.6,213.8 q0.4,4 3.6,7.2" stroke="#dcebfa" stroke-width="0.8" fill="none"/><path d="M870.2,213.8 q2.4,-6.4 6,-6.8 h4 q3.6,0.4 6,6.8 z" fill="#c4c4c4" stroke="#8f8f8f" stroke-width="0.7" stroke-dasharray="1.2 0.9"/><path d="M873,211 h10.4 M878.2,207 v6.8 M875.4,207.4 l-1.6,6.4 M881,207.4 l1.6,6.4" stroke="#9c9c9c" stroke-width="0.6" stroke-dasharray="1 0.8" fill="none"/><rect x="879" y="215" width="7.2" height="7.2" rx="1" fill="#d3ac10"/><path d="M880.6,220.6 l4,-4" stroke="#fff" stroke-width="1.7" stroke-linecap="round"/>
<path d="M367.8,320.4 h10.6 l-5.3,6.6 z" fill="#3a3a3a"/>
<path d="M389.4,381.6 l2.8,3.3 l4.6,-7.2" stroke="#fff" stroke-width="1.35" fill="none" stroke-linecap="round" stroke-linejoin="round"/>
<path d="M389.4,411.6 l2.8,3.3 l4.6,-7.2" stroke="#fff" stroke-width="1.35" fill="none" stroke-linecap="round" stroke-linejoin="round"/>
<path d="M389.4,441.6 l2.8,3.3 l4.6,-7.2" stroke="#fff" stroke-width="1.35" fill="none" stroke-linecap="round" stroke-linejoin="round"/>
<path d="M389.4,471.6 l2.8,3.3 l4.6,-7.2" stroke="#fff" stroke-width="1.35" fill="none" stroke-linecap="round" stroke-linejoin="round"/>
<path d="M389.4,501.6 l2.8,3.3 l4.6,-7.2" stroke="#fff" stroke-width="1.35" fill="none" stroke-linecap="round" stroke-linejoin="round"/>
<path d="M389.4,531.6 l2.8,3.3 l4.6,-7.2" stroke="#fff" stroke-width="1.35" fill="none" stroke-linecap="round" stroke-linejoin="round"/>
</svg>

</div>
</body>
</html>
